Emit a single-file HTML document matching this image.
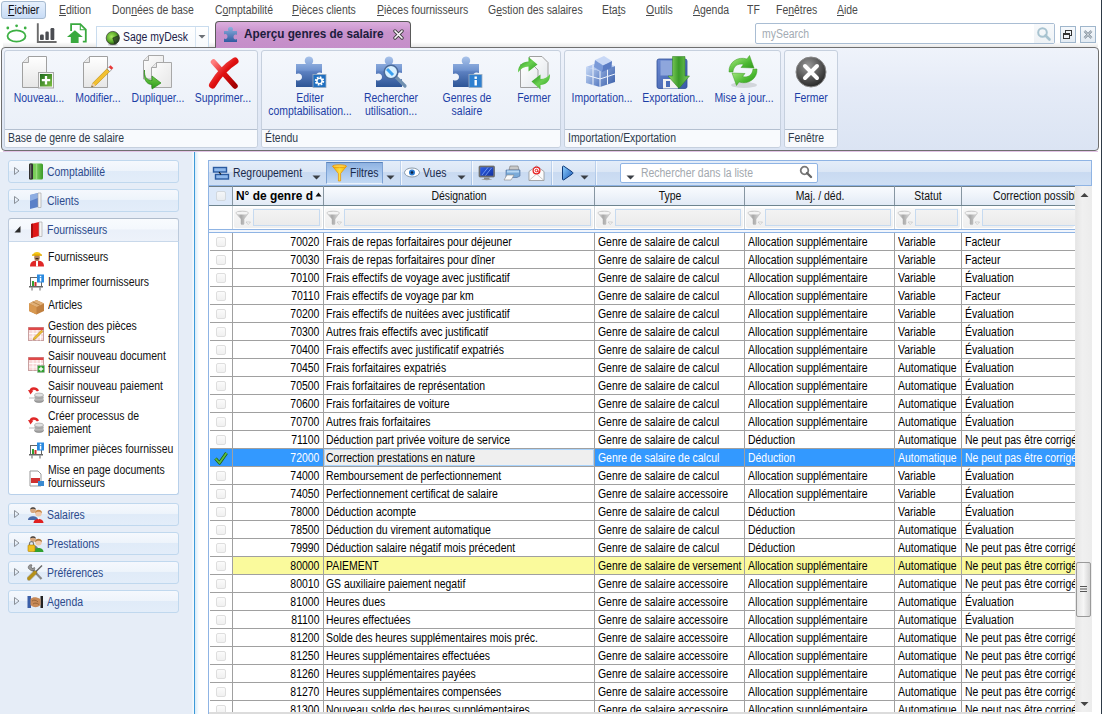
<!DOCTYPE html><html><head><meta charset="utf-8"><style>
html,body{margin:0;padding:0;}
body{width:1102px;height:714px;overflow:hidden;position:relative;background:#fff;font-family:"Liberation Sans",sans-serif;}
.t{position:absolute;line-height:1;white-space:nowrap;}
.r{position:absolute;box-sizing:border-box;}
u{text-decoration:underline;text-underline-offset:1px;text-decoration-thickness:1px;}
</style></head><body>
<div class="r" style="left:1px;top:1px;width:45px;height:18px;border:1px solid #a6bad0;border-radius:3px;background:linear-gradient(#e6f0fc,#c8dcf6);"></div>
<div class="t " style="top:3.64px;font-size:12px;color:#101018;left:8.20px;transform-origin:0 50%;transform:scaleX(0.87);"><u>F</u>ichier</div>
<div class="t " style="top:3.64px;font-size:12px;color:#4a4a4a;left:59.40px;transform-origin:0 50%;transform:scaleX(0.87);"><u>E</u>dition</div>
<div class="t " style="top:3.64px;font-size:12px;color:#4a4a4a;left:111.60px;transform-origin:0 50%;transform:scaleX(0.87);">Don<u>n</u>ées de base</div>
<div class="t " style="top:3.64px;font-size:12px;color:#4a4a4a;left:215.00px;transform-origin:0 50%;transform:scaleX(0.87);">C<u>o</u>mptabilité</div>
<div class="t " style="top:3.64px;font-size:12px;color:#4a4a4a;left:292.30px;transform-origin:0 50%;transform:scaleX(0.87);"><u>P</u>ièces clients</div>
<div class="t " style="top:3.64px;font-size:12px;color:#4a4a4a;left:376.60px;transform-origin:0 50%;transform:scaleX(0.87);"><u>P</u>ièces fournisseurs</div>
<div class="t " style="top:3.64px;font-size:12px;color:#4a4a4a;left:487.50px;transform-origin:0 50%;transform:scaleX(0.87);">G<u>e</u>stion des salaires</div>
<div class="t " style="top:3.64px;font-size:12px;color:#4a4a4a;left:602.20px;transform-origin:0 50%;transform:scaleX(0.87);">Eta<u>t</u>s</div>
<div class="t " style="top:3.64px;font-size:12px;color:#4a4a4a;left:645.80px;transform-origin:0 50%;transform:scaleX(0.87);"><u>O</u>utils</div>
<div class="t " style="top:3.64px;font-size:12px;color:#4a4a4a;left:692.60px;transform-origin:0 50%;transform:scaleX(0.87);"><u>A</u>genda</div>
<div class="t " style="top:3.64px;font-size:12px;color:#4a4a4a;left:746.50px;transform-origin:0 50%;transform:scaleX(0.87);">TF</div>
<div class="t " style="top:3.64px;font-size:12px;color:#4a4a4a;left:776.40px;transform-origin:0 50%;transform:scaleX(0.87);">Fe<u>n</u>êtres</div>
<div class="t " style="top:3.64px;font-size:12px;color:#4a4a4a;left:837.20px;transform-origin:0 50%;transform:scaleX(0.87);"><u>A</u>ide</div>
<div class="r" style="left:3px;top:42px;width:1095px;height:5px;background:linear-gradient(rgba(0,0,0,0),rgba(0,0,0,.09));"></div>
<svg class="r" style="left:5px;top:22px;" width="24" height="22" viewBox="0 0 24 22"><ellipse cx="11.5" cy="14" rx="9" ry="5.6" fill="none" stroke="#3cb043" stroke-width="1.8"/><circle cx="2.8" cy="6" r="1.4" fill="#3cb043"/><circle cx="11.6" cy="3.8" r="1.4" fill="#3cb043"/><circle cx="20.2" cy="6" r="1.4" fill="#3cb043"/></svg>
<svg class="r" style="left:36px;top:22px;" width="22" height="22" viewBox="0 0 22 22"><path d="M1.8 1.3 V20 H20.6" fill="none" stroke="#6b6b6b" stroke-width="1.9"/><rect x="4" y="12.5" width="3.8" height="5.6" rx="1.2" fill="#4b4d52"/><rect x="9.4" y="9.6" width="3.4" height="8.5" rx="1.2" fill="#4b4d52"/><rect x="14.5" y="6" width="3.8" height="12.1" rx="1.2" fill="#4b4d52"/></svg>
<svg class="r" style="left:66px;top:22px;" width="22" height="22" viewBox="0 0 22 22"><path d="M5.1 9 V2.2 H14.3 L19.8 7.7 V19.7 H16.8" fill="none" stroke="#3aa93f" stroke-width="1.8"/><path d="M14.3 2.2 V7.7 H19.8" fill="none" stroke="#3aa93f" stroke-width="1.1"/><path d="M1 15 L8.9 8.2 L16.8 15 H12.6 V20.9 H4.8 V15 Z" fill="#3aa93f"/></svg>
<div class="r" style="left:96px;top:26px;width:113px;height:22px;border:1px solid #c9dcee;border-bottom:none;background:linear-gradient(#ffffff,#f6f9fc);"></div>
<div class="r" style="left:195px;top:27px;width:1px;height:20px;background:#d6e4f1;"></div>
<svg class="r" style="left:197px;top:34px;" width="10" height="6" viewBox="0 0 10 6"><path d="M1.5 1 H8.5 L5 4.5 Z" fill="#6a6f75"/></svg>
<svg class="r" style="left:104px;top:30px;" width="16" height="16" viewBox="0 0 16 16"><defs><radialGradient id="gl" cx="40%" cy="40%" r="65%"><stop offset="0" stop-color="#a8e860"/><stop offset=".6" stop-color="#58a828"/><stop offset="1" stop-color="#1e3a10"/></radialGradient></defs><ellipse cx="8.8" cy="14.8" rx="5" ry="1" fill="#000" opacity=".2"/><circle cx="8.8" cy="8" r="6.6" fill="url(#gl)" stroke="#3a3a3a" stroke-width=".7"/><path d="M8.8 8 L14.8 5.5 A6.5 6.5 0 0 1 11 14.2 Z" fill="#2a3a28" opacity=".75"/><path d="M8.8 8 L14.8 5.5 M8.8 8 L11 14.2" stroke="#1a2a18" stroke-width=".6"/></svg>
<div class="t " style="top:31.04px;font-size:12px;color:#1c1c48;left:123.00px;transform-origin:0 50%;transform:scaleX(0.87);">Sage myDesk</div>
<div class="r" style="left:215px;top:21px;width:196px;height:27px;border:1px solid #5a5a5a;border-bottom:none;border-radius:4px 4px 0 0;background:linear-gradient(#dcaede,#c892cc 40%,#c58ec9);"></div>
<svg class="r" style="left:223px;top:26px;" width="17" height="17" viewBox="0 0 17 17"><defs><linearGradient id="pz" x1="0" y1="0" x2="0" y2="1"><stop offset="0" stop-color="#8fb1e0"/><stop offset="1" stop-color="#2f5aa0"/></linearGradient></defs><path d="M1 5 H5.5 C4.5 3 5 1 7.5 1 C10 1 10.5 3 9.5 5 H14 V9 C12 8 10.5 9 10.5 11 C10.5 13 12 14 14 13 V16 H1 V12.5 C3 13.5 4.5 12.5 4.5 10.5 C4.5 8.5 3 7.5 1 8.5 Z" fill="url(#pz)"/></svg>
<div class="t " style="top:28.34px;font-size:12px;color:#1c1c3c;font-weight:bold;left:244.30px;transform-origin:0 50%;transform:scaleX(0.978);">Aperçu genres de salaire</div>
<svg class="r" style="left:393px;top:29px;" width="11" height="11" viewBox="0 0 11 11"><path d="M2 2 L9 9 M9 2 L2 9" stroke="#404040" stroke-width="3.4" stroke-linecap="round"/><path d="M2 2 L9 9 M9 2 L2 9" stroke="#fbf4fb" stroke-width="1.7" stroke-linecap="round"/></svg>
<div class="r" style="left:755px;top:23px;width:300px;height:21px;border:1px solid #a9bdd3;border-radius:2px;background:#fff;"></div>
<div class="r" style="left:1034px;top:24px;width:20px;height:19px;background:linear-gradient(#f7f9fb,#eef2f5);"></div>
<div class="t " style="top:28.04px;font-size:12px;color:#a3abb3;left:762.00px;transform-origin:0 50%;transform:scaleX(0.87);">mySearch</div>
<svg class="r" style="left:1036px;top:26px;" width="16" height="16" viewBox="0 0 16 16"><circle cx="6.5" cy="6.5" r="4.3" fill="none" stroke="#a8c3d0" stroke-width="2"/><path d="M9.5 9.5 L13.5 13.5" stroke="#a8c3d0" stroke-width="2.6" stroke-linecap="round"/></svg>
<div class="r" style="left:1060px;top:26px;width:16px;height:17px;border:1px solid #9fb6cc;background:linear-gradient(#f6f9fc,#e3ebf3);"></div>
<svg class="r" style="left:1060px;top:26px;" width="16" height="17" viewBox="0 0 16 17"><rect x="5.5" y="4.5" width="6" height="5" fill="none" stroke="#333" stroke-width="1"/><rect x="3.5" y="7.5" width="6" height="5" fill="#eef2f7" stroke="#333" stroke-width="1"/><rect x="3.5" y="7.5" width="6" height="1.5" fill="#333"/></svg>
<div class="r" style="left:1080px;top:26px;width:16px;height:17px;border:1px solid #9fb6cc;background:linear-gradient(#f6f9fc,#e3ebf3);"></div>
<svg class="r" style="left:1080px;top:26px;" width="16" height="17" viewBox="0 0 16 17"><path d="M4.5 5 L11.5 12 M11.5 5 L4.5 12" stroke="#6a7a88" stroke-width="2.4"/><path d="M4.5 5 L11.5 12 M11.5 5 L4.5 12" stroke="#f4f7fa" stroke-width="1"/></svg>
<div class="r" style="left:1101px;top:0px;width:1px;height:714px;background:#2e3a46;"></div>
<div class="r" style="left:1px;top:47px;width:1098px;height:104px;border:1px solid #6f6f6f;border-radius:4px;background:linear-gradient(#eff3fb,#e5ebf7 40%,#dbe4f3);"></div>
<div class="r" style="left:3px;top:151px;width:1095px;height:1px;background:#e3c4e6;"></div>
<div class="r" style="left:216px;top:47px;width:194px;height:1px;background:#c58ec9;"></div>
<div class="r" style="left:4px;top:50px;width:254px;height:98px;border:1px solid #c6d0de;border-radius:3px;background:linear-gradient(#f4f7fc,#e8eef7);"></div>
<div class="r" style="left:5px;top:129px;width:252px;height:18px;border-top:1px solid #b4c0d0;background:#f8fafd;border-radius:0 0 2px 2px;"></div>
<div class="t " style="top:132.14px;font-size:12px;color:#2e3a4c;left:8.00px;transform-origin:0 50%;transform:scaleX(0.87);">Base de genre de salaire</div>
<div class="r" style="left:261px;top:50px;width:300px;height:98px;border:1px solid #c6d0de;border-radius:3px;background:linear-gradient(#f4f7fc,#e8eef7);"></div>
<div class="r" style="left:262px;top:129px;width:298px;height:18px;border-top:1px solid #b4c0d0;background:#f8fafd;border-radius:0 0 2px 2px;"></div>
<div class="t " style="top:132.14px;font-size:12px;color:#2e3a4c;left:265.00px;transform-origin:0 50%;transform:scaleX(0.87);">Étendu</div>
<div class="r" style="left:564px;top:50px;width:217px;height:98px;border:1px solid #c6d0de;border-radius:3px;background:linear-gradient(#f4f7fc,#e8eef7);"></div>
<div class="r" style="left:565px;top:129px;width:215px;height:18px;border-top:1px solid #b4c0d0;background:#f8fafd;border-radius:0 0 2px 2px;"></div>
<div class="t " style="top:132.14px;font-size:12px;color:#2e3a4c;left:568.00px;transform-origin:0 50%;transform:scaleX(0.87);">Importation/Exportation</div>
<div class="r" style="left:784px;top:50px;width:54px;height:98px;border:1px solid #c6d0de;border-radius:3px;background:linear-gradient(#f4f7fc,#e8eef7);"></div>
<div class="r" style="left:785px;top:129px;width:52px;height:18px;border-top:1px solid #b4c0d0;background:#f8fafd;border-radius:0 0 2px 2px;"></div>
<div class="t " style="top:132.14px;font-size:12px;color:#2e3a4c;left:788.00px;transform-origin:0 50%;transform:scaleX(0.87);">Fenêtre</div>
<svg class="r" style="left:20px;top:54px;" width="40" height="36" viewBox="0 0 40 36"><defs><linearGradient id="dn" x1="0" y1="0" x2="0" y2="1"><stop offset="0" stop-color="#ffffff"/><stop offset="1" stop-color="#e6e6e6"/></linearGradient></defs><path d="M8.5 2.5 H26.5 V33.5 H2.5 V8.5 Z" fill="url(#dn)" stroke="#a0a0a0"/><path d="M8.5 2.5 V8.5 H2.5" fill="#e8e8e8" stroke="#a8a8a8"/><defs><linearGradient id="gp" x1="0" y1="0" x2="1" y2="1"><stop offset="0" stop-color="#1e6a1e"/><stop offset="1" stop-color="#7cc040"/></linearGradient></defs><rect x="18.5" y="18.5" width="15" height="15.5" fill="#f4f4f4" stroke="#a8a8a8"/><rect x="20" y="20" width="12" height="12.5" fill="url(#gp)"/><path d="M26 22 V30.5 M21.8 26.2 H30.2" stroke="#fff" stroke-width="2.3"/></svg>
<div class="t " style="top:92.34px;font-size:12px;color:#1c3ea6;left:-361.50px;width:800px;text-align:center;transform-origin:50% 50%;transform:scaleX(0.87);">Nouveau...</div>
<svg class="r" style="left:81px;top:54px;" width="40" height="36" viewBox="0 0 40 36"><defs><linearGradient id="dm" x1="0" y1="0" x2="0" y2="1"><stop offset="0" stop-color="#ffffff"/><stop offset="1" stop-color="#e6e6e6"/></linearGradient></defs><path d="M8.5 2.5 H26.5 V33.5 H2.5 V8.5 Z" fill="url(#dm)" stroke="#a0a0a0"/><path d="M8.5 2.5 V8.5 H2.5" fill="#e8e8e8" stroke="#a8a8a8"/><path d="M10.5 33 L11.8 29 L26 14.8 L28.7 17.5 L14.5 31.5 Z" fill="#f2c030" stroke="#b88a10" stroke-width=".6"/><path d="M26 14.8 L27.8 13 L30.5 15.7 L28.7 17.5 Z" fill="#fff" stroke="#555" stroke-width=".5"/><path d="M27.8 13 L29.6 11.2 L32.3 13.9 L30.5 15.7 Z" fill="#e83838"/><path d="M10.5 33 L11.8 29 L14.5 31.5 Z" fill="#f0d0b0"/><path d="M10.5 33 L11 31.6 L12 32.5 Z" fill="#333"/></svg>
<div class="t " style="top:92.34px;font-size:12px;color:#1c3ea6;left:-302.00px;width:800px;text-align:center;transform-origin:50% 50%;transform:scaleX(0.87);">Modifier...</div>
<svg class="r" style="left:143px;top:55px;" width="32" height="35" viewBox="0 0 32 35"><defs><linearGradient id="dg" x1="0" y1="0" x2="1" y2="1"><stop offset="0" stop-color="#fdfdfd"/><stop offset="1" stop-color="#e6e6e6"/></linearGradient><linearGradient id="ga" x1="0" y1="0" x2="0" y2="1"><stop offset="0" stop-color="#8ee060"/><stop offset="1" stop-color="#2c9a18"/></linearGradient></defs><path d="M5.5 0.5 H20.5 V24 H0.5 V5.5 Z" fill="url(#dg)" stroke="#a8a8a8"/><path d="M5.5 0.5 V5.5 H0.5" fill="#e8e8e8" stroke="#a8a8a8"/><path d="M13.5 7.5 H28.5 V32.5 H8.5 V12.5 Z" fill="url(#dg)" stroke="#a8a8a8"/><path d="M13.5 7.5 V12.5 H8.5" fill="#e8e8e8" stroke="#a8a8a8"/><path d="M1.5 15 C1 22 4 25.5 9 25.5 V21 L18 28 L9 34 V29.5 C3 29.5 0.5 24 1.5 15 Z" fill="url(#ga)" stroke="#2a8a1a" stroke-width=".7"/></svg>
<div class="t " style="top:92.34px;font-size:12px;color:#1c3ea6;left:-242.00px;width:800px;text-align:center;transform-origin:50% 50%;transform:scaleX(0.87);">Dupliquer...</div>
<svg class="r" style="left:205px;top:56px;" width="36" height="34" viewBox="0 0 36 34"><defs><linearGradient id="rx" x1="0" y1="0" x2="1" y2="1"><stop offset="0" stop-color="#ff8080"/><stop offset=".5" stop-color="#e01010"/><stop offset="1" stop-color="#a00000"/></linearGradient></defs><path d="M8.5 6 L30 30" stroke="url(#rx)" stroke-width="5.5" stroke-linecap="round"/><path d="M30 5 C22 10 14 18 7.5 29" fill="none" stroke="url(#rx)" stroke-width="7" stroke-linecap="round"/></svg>
<div class="t " style="top:92.34px;font-size:12px;color:#1c3ea6;left:-177.20px;width:800px;text-align:center;transform-origin:50% 50%;transform:scaleX(0.87);">Supprimer...</div>
<svg class="r" style="left:295px;top:55px;" width="34" height="34" viewBox="0 0 34 34"><defs><linearGradient id="pz2" x1="0" y1="0" x2="0" y2="1"><stop offset="0" stop-color="#a9c3ea"/><stop offset=".45" stop-color="#6f93cf"/><stop offset=".5" stop-color="#5c80c0"/><stop offset="1" stop-color="#2d5596"/></linearGradient></defs><path d="M1 9 H11 C8.5 6 10 1.5 14 1.5 C18 1.5 19.5 6 17 9 H27 V18 C24 16.5 21 18 21 21 C21 24 24 25.5 27 24 V32 H1 V25 C4 26.5 7 25 7 22 C7 19 4 17.5 1 19 Z" fill="url(#pz2)"/><rect x="18" y="19.5" width="13" height="13" fill="#1f6fc0" stroke="#a0b0c0" stroke-width=".8"/><circle cx="24.5" cy="26" r="3.6" fill="none" stroke="#fff" stroke-width="2.2" stroke-dasharray="1.6 1.2"/><circle cx="24.5" cy="26" r="2.6" fill="none" stroke="#fff" stroke-width="1.4"/></svg>
<div class="t " style="top:92.34px;font-size:12px;color:#1c3ea6;left:-90.50px;width:800px;text-align:center;transform-origin:50% 50%;transform:scaleX(0.87);">Editer</div>
<div class="t " style="top:105.34px;font-size:12px;color:#1c3ea6;left:-90.50px;width:800px;text-align:center;transform-origin:50% 50%;transform:scaleX(0.87);">comptabilisation...</div>
<svg class="r" style="left:375px;top:55px;" width="34" height="34" viewBox="0 0 34 34"><defs><linearGradient id="pz3" x1="0" y1="0" x2="0" y2="1"><stop offset="0" stop-color="#a9c3ea"/><stop offset=".45" stop-color="#6f93cf"/><stop offset=".5" stop-color="#5c80c0"/><stop offset="1" stop-color="#2d5596"/></linearGradient></defs><path d="M1 9 H11 C8.5 6 10 1.5 14 1.5 C18 1.5 19.5 6 17 9 H27 V18 C24 16.5 21 18 21 21 C21 24 24 25.5 27 24 V32 H1 V25 C4 26.5 7 25 7 22 C7 19 4 17.5 1 19 Z" fill="url(#pz3)"/><path d="M21 22 L30 31" stroke="#7090b0" stroke-width="3.2" stroke-linecap="round"/><circle cx="16" cy="17" r="6.8" fill="#d8f0ff" stroke="#4a6a98" stroke-width="1.6"/><path d="M12 14 L18 20" stroke="#3aa0f0" stroke-width="3"/></svg>
<div class="t " style="top:92.34px;font-size:12px;color:#1c3ea6;left:-9.00px;width:800px;text-align:center;transform-origin:50% 50%;transform:scaleX(0.87);">Rechercher</div>
<div class="t " style="top:105.34px;font-size:12px;color:#1c3ea6;left:-9.00px;width:800px;text-align:center;transform-origin:50% 50%;transform:scaleX(0.87);">utilisation...</div>
<svg class="r" style="left:452px;top:55px;" width="34" height="34" viewBox="0 0 34 34"><defs><linearGradient id="pz4" x1="0" y1="0" x2="0" y2="1"><stop offset="0" stop-color="#a9c3ea"/><stop offset=".45" stop-color="#6f93cf"/><stop offset=".5" stop-color="#5c80c0"/><stop offset="1" stop-color="#2d5596"/></linearGradient></defs><path d="M1 9 H11 C8.5 6 10 1.5 14 1.5 C18 1.5 19.5 6 17 9 H27 V18 C24 16.5 21 18 21 21 C21 24 24 25.5 27 24 V32 H1 V25 C4 26.5 7 25 7 22 C7 19 4 17.5 1 19 Z" fill="url(#pz4)"/><rect x="17" y="19.5" width="13" height="13" fill="#2f80d0" stroke="#a0b0c0" stroke-width=".8"/><rect x="22.5" y="21.5" width="2.4" height="2.4" fill="#fff"/><rect x="22.5" y="25" width="2.4" height="5.5" fill="#fff"/></svg>
<div class="t " style="top:92.34px;font-size:12px;color:#1c3ea6;left:66.50px;width:800px;text-align:center;transform-origin:50% 50%;transform:scaleX(0.87);">Genres de</div>
<div class="t " style="top:105.34px;font-size:12px;color:#1c3ea6;left:66.50px;width:800px;text-align:center;transform-origin:50% 50%;transform:scaleX(0.87);">salaire</div>
<svg class="r" style="left:516px;top:55px;" width="36" height="35" viewBox="0 0 36 35"><defs><linearGradient id="fd" x1="0" y1="0" x2="1" y2="1"><stop offset="0" stop-color="#ffffff"/><stop offset="1" stop-color="#e4e8ec"/></linearGradient><linearGradient id="fa" x1="0" y1="0" x2="1" y2="1"><stop offset="0" stop-color="#1f8a18"/><stop offset=".5" stop-color="#6ad050"/><stop offset="1" stop-color="#2a9a20"/></linearGradient></defs><path d="M13.5 1.5 H26 L32 7.5 V25 H13.5 Z" fill="url(#fd)" stroke="#a0a0a0"/><path d="M4.5 9.5 H16.5 L22 15 V32.5 H4.5 Z" fill="url(#fd)" stroke="#a0a0a0"/><path d="M2 17.5 C2 10 7 6.5 12.5 6.5 V2 L21.5 9.5 L12.5 16.5 V11.5 C8 11.5 5 13.5 2 17.5 Z" fill="url(#fa)"/><path d="M34 19 C34.5 26.5 29.5 30 24.5 30 V34.5 L15.5 26.5 L24.5 19.5 V24 C28.5 24 31.5 22.5 34 19 Z" fill="url(#fa)"/></svg>
<div class="t " style="top:92.34px;font-size:12px;color:#1c3ea6;left:134.00px;width:800px;text-align:center;transform-origin:50% 50%;transform:scaleX(0.87);">Fermer</div>
<svg class="r" style="left:584px;top:55px;" width="34" height="34" viewBox="0 0 34 34"><defs><linearGradient id="cb" x1="0" y1="0" x2="1" y2="1"><stop offset="0" stop-color="#c8daf6"/><stop offset="1" stop-color="#5478c0"/></linearGradient><linearGradient id="cb2" x1="0" y1="0" x2="1" y2="1"><stop offset="0" stop-color="#90acdf"/><stop offset="1" stop-color="#3a5ea8"/></linearGradient></defs><path d="M2 12 L16 16 V32 L2 28 Z" fill="url(#cb)"/><path d="M16 16 L31 11 V27 L16 32 Z" fill="url(#cb2)"/><path d="M2 12 L9 9.5 L16 8 L31 11 L16 16 Z" fill="#b0c6ee"/><path d="M2 20 L16 24 L31 19 M9 10 V30 M16 16 V32 M23.5 13.5 V29.5" fill="none" stroke="#eef3fc" stroke-width="1"/><path d="M11 5 L20 1 L28 6 L19 10.5 Z" fill="#c8d8f6"/><path d="M11 5 L19 10.5 L18 17 L10 12 Z" fill="#7a9ad8"/><path d="M19 10.5 L28 6 L27.5 13 L18 17 Z" fill="#5a7cc4"/></svg>
<div class="t " style="top:92.34px;font-size:12px;color:#1c3ea6;left:201.50px;width:800px;text-align:center;transform-origin:50% 50%;transform:scaleX(0.87);">Importation...</div>
<svg class="r" style="left:655px;top:55px;" width="36" height="35" viewBox="0 0 36 35"><defs><linearGradient id="ea" x1="0" y1="0" x2="1" y2="0"><stop offset="0" stop-color="#9ae070"/><stop offset=".5" stop-color="#3a9a28"/><stop offset="1" stop-color="#7ac860"/></linearGradient><linearGradient id="fb" x1="0" y1="0" x2="1" y2="1"><stop offset="0" stop-color="#6a88d0"/><stop offset="1" stop-color="#3a5aa8"/></linearGradient></defs><rect x="2" y="4" width="30" height="29.5" rx="2" fill="url(#fb)" stroke="#2e4e98" stroke-width=".8"/><rect x="5.5" y="5.5" width="13" height="15" fill="#8ea6dc"/><rect x="8" y="24" width="15" height="9.5" fill="#f2f2f2"/><rect x="11" y="26" width="4" height="6" fill="#4a6cb8"/><path d="M17.5 1.5 H30 V21 H34.5 L24 33.5 L13 21 H17.5 Z" fill="url(#ea)" stroke="#2a7a1a" stroke-width=".5"/></svg>
<div class="t " style="top:92.34px;font-size:12px;color:#1c3ea6;left:273.20px;width:800px;text-align:center;transform-origin:50% 50%;transform:scaleX(0.87);">Exportation...</div>
<svg class="r" style="left:726px;top:55px;" width="34" height="34" viewBox="0 0 34 34"><defs><linearGradient id="mj" x1="0" y1="0" x2="1" y2="1"><stop offset="0" stop-color="#b8f090"/><stop offset=".6" stop-color="#4ab830"/><stop offset="1" stop-color="#2a8a18"/></linearGradient></defs><ellipse cx="18" cy="30" rx="13" ry="3" fill="#000" opacity=".12"/><path d="M3 17 C2.5 7 12 1 21 4 L23.5 0.5 L28 13 L15 12.5 L17.5 9.5 C12 8 7.5 11 7 17 Z" fill="url(#mj)" stroke="#3a9a20" stroke-width=".5"/><path d="M31 14 C31.5 24 22 30 13 27 L10.5 30.5 L6 18 L19 18.5 L16.5 21.5 C22 23 26.5 20 27 14 Z" fill="url(#mj)" stroke="#3a9a20" stroke-width=".5"/></svg>
<div class="t " style="top:92.34px;font-size:12px;color:#1c3ea6;left:344.00px;width:800px;text-align:center;transform-origin:50% 50%;transform:scaleX(0.87);">Mise à jour...</div>
<svg class="r" style="left:794px;top:55px;" width="34" height="34" viewBox="0 0 34 34"><defs><radialGradient id="gc" cx="40%" cy="30%" r="70%"><stop offset="0" stop-color="#9a9a9a"/><stop offset="1" stop-color="#2a2a2a"/></radialGradient></defs><circle cx="17" cy="17" r="15" fill="url(#gc)" stroke="#888" stroke-width="1"/><path d="M11 11 L23 23 M23 11 L11 23" stroke="#fff" stroke-width="4" stroke-linecap="round"/></svg>
<div class="t " style="top:92.34px;font-size:12px;color:#1c3ea6;left:411.00px;width:800px;text-align:center;transform-origin:50% 50%;transform:scaleX(0.87);">Fermer</div>
<div class="r" style="left:0px;top:152px;width:192px;height:562px;background:#e6edf7;"></div>
<div class="r" style="left:192px;top:152px;width:3px;height:562px;background:linear-gradient(90deg,#e9f2fb,#ffffff);"></div>
<div class="r" style="left:194px;top:152px;width:1px;height:562px;background:#3d9ad8;"></div>
<div class="r" style="left:195px;top:152px;width:4px;height:562px;background:linear-gradient(90deg,#d8ecfa,#ffffff);"></div>
<div class="r" style="left:8px;top:160px;width:171px;height:23px;border:1px solid #c0d8ee;border-radius:3px;background:linear-gradient(#f5f8fd,#eef4fb 45%,#e0ebf8 50%,#e3edf9);"></div>
<svg class="r" style="left:13px;top:166px;" width="8" height="10" viewBox="0 0 8 10"><path d="M1.5 1.5 L6 5 L1.5 8.5 Z" fill="none" stroke="#8a9098" stroke-width="1"/></svg>
<svg class="r" style="left:27px;top:163px;" width="17" height="17" viewBox="0 0 17 17"><defs><linearGradient id="cg" x1="0" y1="0" x2="1" y2="0"><stop offset="0" stop-color="#60c040"/><stop offset=".5" stop-color="#80d060"/><stop offset="1" stop-color="#3a9a28"/></linearGradient></defs><rect x="2" y="0.5" width="14" height="16" rx="1.5" fill="url(#cg)"/><rect x="2" y="0.5" width="4" height="16" rx="1.2" fill="#303030"/><rect x="3.2" y="1.5" width="1" height="14" fill="#808080"/><rect x="9" y="1" width="1.2" height="15" fill="#a8e090" opacity=".7"/></svg>
<div class="t " style="top:166.34px;font-size:12px;color:#2c4a8c;left:47.20px;transform-origin:0 50%;transform:scaleX(0.87);">Comptabilité</div>
<div class="r" style="left:8px;top:189px;width:171px;height:23px;border:1px solid #c0d8ee;border-radius:3px;background:linear-gradient(#f5f8fd,#eef4fb 45%,#e0ebf8 50%,#e3edf9);"></div>
<svg class="r" style="left:13px;top:195px;" width="8" height="10" viewBox="0 0 8 10"><path d="M1.5 1.5 L6 5 L1.5 8.5 Z" fill="none" stroke="#8a9098" stroke-width="1"/></svg>
<svg class="r" style="left:27px;top:192px;" width="17" height="17" viewBox="0 0 17 17"><path d="M3 3 L11 1 V15 L3 17 Z" fill="#5a80c8"/><path d="M3 3 L11 1 V6 L3 9 Z" fill="#9ab8e8" opacity=".8"/><path d="M11 1 H14 V15.5 H11 Z" fill="#f4f4f4" stroke="#a0a0a0" stroke-width=".6"/></svg>
<div class="t " style="top:195.34px;font-size:12px;color:#2c4a8c;left:47.20px;transform-origin:0 50%;transform:scaleX(0.87);">Clients</div>
<div class="r" style="left:8px;top:218px;width:171px;height:24px;border:1px solid #bccadc;border-top-color:#b0bccc;border-radius:3px 3px 0 0;background:linear-gradient(#f8fbfe,#f4f8fd 45%,#eaf0f9 50%,#edf2fa);"></div>
<svg class="r" style="left:14px;top:225px;" width="8" height="9" viewBox="0 0 8 9"><path d="M6.5 1 V7.5 H0.5 Z" fill="#2a2a2a"/></svg>
<svg class="r" style="left:27px;top:221px;" width="17" height="17" viewBox="0 0 17 17"><path d="M4 3 L12 1 V15 L4 17 Z" fill="#e01818"/><path d="M4 3 L6 2.5 V16.5 L4 17 Z" fill="#a01010"/><path d="M12 1 H15 V15.5 H12 Z" fill="#f4f4f4" stroke="#a0a0a0" stroke-width=".6"/></svg>
<div class="t " style="top:224.34px;font-size:12px;color:#2c4a8c;left:47.20px;transform-origin:0 50%;transform:scaleX(0.87);">Fournisseurs</div>
<div class="r" style="left:8px;top:241px;width:171px;height:254px;border:1px solid #b8d0ea;border-top:1px solid #c8d8ea;border-radius:0 0 3px 3px;background:#fff;"></div>
<div class="r" style="left:8px;top:503px;width:171px;height:23px;border:1px solid #c0d8ee;border-radius:3px;background:linear-gradient(#f5f8fd,#eef4fb 45%,#e0ebf8 50%,#e3edf9);"></div>
<svg class="r" style="left:13px;top:509px;" width="8" height="10" viewBox="0 0 8 10"><path d="M1.5 1.5 L6 5 L1.5 8.5 Z" fill="none" stroke="#8a9098" stroke-width="1"/></svg>
<svg class="r" style="left:27px;top:506px;" width="17" height="17" viewBox="0 0 17 17"><circle cx="6" cy="4.2" r="2.8" fill="#d8a880"/><path d="M3.2 3.8 C3 0.5 9 0.5 8.8 3.8 C8 2.5 4 2.5 3.2 3.8 Z" fill="#3a3a3a"/><path d="M1 14 C1 9 11 9 11 14 Z" fill="#4a6aa8"/><circle cx="11.5" cy="7.2" r="3.2" fill="#f0c8a8"/><path d="M8 7.5 C7.5 2.5 15.5 2.5 15 7.5 C14 5 9 5 8 7.5 Z" fill="#c88848"/><path d="M6.5 17 C6.5 11.5 16.5 11.5 16.5 17 Z" fill="#e02020"/><path d="M10.8 11.8 L11.5 14 L12.2 11.8 Z" fill="#fff"/></svg>
<div class="t " style="top:509.34px;font-size:12px;color:#2c4a8c;left:47.20px;transform-origin:0 50%;transform:scaleX(0.87);">Salaires</div>
<div class="r" style="left:8px;top:532px;width:171px;height:23px;border:1px solid #c0d8ee;border-radius:3px;background:linear-gradient(#f5f8fd,#eef4fb 45%,#e0ebf8 50%,#e3edf9);"></div>
<svg class="r" style="left:13px;top:538px;" width="8" height="10" viewBox="0 0 8 10"><path d="M1.5 1.5 L6 5 L1.5 8.5 Z" fill="none" stroke="#8a9098" stroke-width="1"/></svg>
<svg class="r" style="left:27px;top:535px;" width="17" height="17" viewBox="0 0 17 17"><circle cx="6" cy="4.2" r="2.8" fill="#d8a880"/><path d="M3.2 3.8 C3 0.5 9 0.5 8.8 3.8 C8 2.5 4 2.5 3.2 3.8 Z" fill="#3a3a3a"/><path d="M1 14 C1 9 11 9 11 14 Z" fill="#6a7a90"/><circle cx="11.5" cy="7.2" r="3.2" fill="#f0c8a8"/><path d="M8 7.5 C7.5 2.5 15.5 2.5 15 7.5 C14 5 9 5 8 7.5 Z" fill="#b07838"/><path d="M6.5 17 C6.5 11.5 16.5 11.5 16.5 17 Z" fill="#30a030"/><path d="M2.5 10 V8.5 C2.5 6 6.5 6 6.5 8.5 V10" fill="none" stroke="#777" stroke-width="1.2"/><rect x="1" y="10" width="7" height="6.5" rx=".8" fill="#f0c020" stroke="#b08000" stroke-width=".6"/></svg>
<div class="t " style="top:538.34px;font-size:12px;color:#2c4a8c;left:47.20px;transform-origin:0 50%;transform:scaleX(0.87);">Prestations</div>
<div class="r" style="left:8px;top:561px;width:171px;height:23px;border:1px solid #c0d8ee;border-radius:3px;background:linear-gradient(#f5f8fd,#eef4fb 45%,#e0ebf8 50%,#e3edf9);"></div>
<svg class="r" style="left:13px;top:567px;" width="8" height="10" viewBox="0 0 8 10"><path d="M1.5 1.5 L6 5 L1.5 8.5 Z" fill="none" stroke="#8a9098" stroke-width="1"/></svg>
<svg class="r" style="left:27px;top:564px;" width="17" height="17" viewBox="0 0 17 17"><path d="M4 4 L14.5 15" stroke="#888" stroke-width="2.2"/><path d="M1.5 4.5 C0.5 2 3 0 5 1 L4 3.2 L5.5 4.6 L7.5 3.5 C8.5 5.5 6.5 7.5 4 6.5 Z" fill="#999" stroke="#555" stroke-width=".6"/><path d="M15 1.5 L7.5 9" stroke="#666" stroke-width="1.4"/><path d="M8 8.5 L2 14.5" stroke="#e8b818" stroke-width="3.4" stroke-linecap="round"/><path d="M8 8.5 L2 14.5" stroke="#222" stroke-width="4.6" stroke-linecap="round" opacity=".25"/></svg>
<div class="t " style="top:567.34px;font-size:12px;color:#2c4a8c;left:47.20px;transform-origin:0 50%;transform:scaleX(0.87);">Préférences</div>
<div class="r" style="left:8px;top:590px;width:171px;height:23px;border:1px solid #c0d8ee;border-radius:3px;background:linear-gradient(#f5f8fd,#eef4fb 45%,#e0ebf8 50%,#e3edf9);"></div>
<svg class="r" style="left:13px;top:596px;" width="8" height="10" viewBox="0 0 8 10"><path d="M1.5 1.5 L6 5 L1.5 8.5 Z" fill="none" stroke="#8a9098" stroke-width="1"/></svg>
<svg class="r" style="left:27px;top:593px;" width="17" height="17" viewBox="0 0 17 17"><rect x="0.5" y="3" width="3.5" height="12" fill="#3a5ea8"/><rect x="13.5" y="3" width="2.5" height="12" fill="#222"/><path d="M3.5 6 C6 3.5 9 3.5 13.5 6 V12 C10 15 7 15 3.5 12 Z" fill="#c88a58"/><path d="M5 8 C7 6.5 9 7 11 9 M6 11 C8 9.5 10 10 12 11.5" stroke="#8a5a30" stroke-width=".8" fill="none"/></svg>
<div class="t " style="top:596.34px;font-size:12px;color:#2c4a8c;left:47.20px;transform-origin:0 50%;transform:scaleX(0.87);">Agenda</div>
<svg class="r" style="left:28px;top:250px;" width="17" height="17" viewBox="0 0 17 17"><path d="M2 16.5 C2 11 6 10.5 9 10.5 C12 10.5 16 11 16 16.5 Z" fill="#e02828"/><path d="M8 10.5 H10 V16.5 H8 Z" fill="#fff"/><ellipse cx="9" cy="7.5" rx="2.8" ry="3.4" fill="#b08060"/><path d="M7.5 8.6 H10.5" stroke="#3a2a1a" stroke-width="1.2"/><path d="M5 5 C5 1 13 1 13 5 Z" fill="#f5c518"/><rect x="4" y="4.4" width="10" height="1.4" fill="#e0a800"/></svg>
<div class="t " style="top:251.14px;font-size:12px;color:#111;left:48.20px;transform-origin:0 50%;transform:scaleX(0.87);">Fournisseurs</div>
<svg class="r" style="left:28px;top:274px;" width="17" height="17" viewBox="0 0 17 17"><rect x="2.5" y="3.5" width="11" height="9" fill="#fff" stroke="#666" stroke-width="1"/><rect x="4" y="7" width="2" height="5" fill="#30a030"/><rect x="6.5" y="8" width="2" height="4" fill="#d03030"/><rect x="1" y="12" width="14" height="1.5" fill="#666"/><path d="M4 13.5 V16.5 M12 13.5 V16.5" stroke="#666" stroke-width="1"/><rect x="9" y="0.5" width="7" height="8" fill="#2a8ae0"/><rect x="11.8" y="1.8" width="1.5" height="1.5" fill="#fff"/><rect x="11.8" y="4" width="1.5" height="3.5" fill="#fff"/></svg>
<div class="t " style="top:275.54px;font-size:12px;color:#111;left:48.20px;transform-origin:0 50%;transform:scaleX(0.87);">Imprimer fournisseurs</div>
<svg class="r" style="left:28px;top:298px;" width="17" height="17" viewBox="0 0 17 17"><path d="M1 5.5 L8.5 2 L16 5.5 V13 L8.5 16.5 L1 13 Z" fill="#c08040"/><path d="M1 5.5 L8.5 9 L16 5.5 L8.5 2 Z" fill="#e0b078"/><path d="M1 5.5 L8.5 9 V16.5 L1 13 Z" fill="#d89850"/><path d="M4.5 3.8 L12 7.3" stroke="#b07838" stroke-width=".8"/></svg>
<div class="t " style="top:299.34px;font-size:12px;color:#111;left:48.20px;transform-origin:0 50%;transform:scaleX(0.87);">Articles</div>
<svg class="r" style="left:28px;top:326px;" width="17" height="17" viewBox="0 0 17 17"><rect x="0.5" y="1.5" width="15" height="13" fill="#fff" stroke="#c8a0a0"/><rect x="0.5" y="1.5" width="15" height="2.5" fill="#e04848"/><rect x="1" y="4" width="14" height="10" fill="#f8d8d8"/><path d="M1 7.5 H15 M1 11 H15 M5 4 V14.5 M9 4 V14.5 M12.5 4 V14.5" stroke="#fff" stroke-width=".9"/><path d="M5 14 L6 11.5 L13.5 4 L15 5.5 L7.5 13 Z" fill="#f0c030" stroke="#a07010" stroke-width=".5"/></svg>
<div class="t " style="top:320.34px;font-size:12px;color:#111;left:48.20px;transform-origin:0 50%;transform:scaleX(0.87);">Gestion des pièces</div>
<div class="t " style="top:332.94px;font-size:12px;color:#111;left:48.20px;transform-origin:0 50%;transform:scaleX(0.87);">fournisseurs</div>
<svg class="r" style="left:28px;top:356px;" width="17" height="17" viewBox="0 0 17 17"><rect x="0.5" y="1.5" width="15" height="13" fill="#fff" stroke="#c8a0a0"/><rect x="0.5" y="1.5" width="15" height="2.5" fill="#e04848"/><rect x="1" y="4" width="14" height="10" fill="#f8d8d8"/><path d="M1 7.5 H15 M1 11 H15 M5 4 V14.5 M9 4 V14.5 M12.5 4 V14.5" stroke="#fff" stroke-width=".9"/><rect x="9.5" y="9.5" width="7" height="7" fill="#30a030" stroke="#aaa" stroke-width=".5"/><path d="M13 10.8 V15.2 M10.8 13 H15.2" stroke="#fff" stroke-width="1.3"/></svg>
<div class="t " style="top:350.34px;font-size:12px;color:#111;left:48.20px;transform-origin:0 50%;transform:scaleX(0.87);">Saisir nouveau document</div>
<div class="t " style="top:362.94px;font-size:12px;color:#111;left:48.20px;transform-origin:0 50%;transform:scaleX(0.87);">fournisseur</div>
<svg class="r" style="left:28px;top:386px;" width="17" height="17" viewBox="0 0 17 17"><path d="M10 5 C8 1.5 3 1.5 2.5 5.5" fill="none" stroke="#e02828" stroke-width="2.4"/><path d="M0 4 L2.5 8.5 L5.5 4.5 Z" fill="#e02828"/><ellipse cx="11" cy="14.5" rx="4.5" ry="2" fill="#a0a0a0" stroke="#777" stroke-width=".5"/><rect x="6.5" y="9" width="9" height="5.5" fill="#b8b8b8"/><ellipse cx="11" cy="9" rx="4.5" ry="2" fill="#e0e0e0" stroke="#888" stroke-width=".5"/><path d="M6.5 11.5 C8 12.5 14 12.5 15.5 11.5" stroke="#888" stroke-width=".5" fill="none"/><path d="M1 12 H6" stroke="#bbb" stroke-width="1"/></svg>
<div class="t " style="top:380.34px;font-size:12px;color:#111;left:48.20px;transform-origin:0 50%;transform:scaleX(0.87);">Saisir nouveau paiement</div>
<div class="t " style="top:392.94px;font-size:12px;color:#111;left:48.20px;transform-origin:0 50%;transform:scaleX(0.87);">fournisseur</div>
<svg class="r" style="left:28px;top:416px;" width="17" height="17" viewBox="0 0 17 17"><path d="M10 5 C8 1.5 3 1.5 2.5 5.5" fill="none" stroke="#e02828" stroke-width="2.4"/><path d="M0 4 L2.5 8.5 L5.5 4.5 Z" fill="#e02828"/><ellipse cx="11" cy="14.5" rx="4.5" ry="2" fill="#a0a0a0" stroke="#777" stroke-width=".5"/><rect x="6.5" y="9" width="9" height="5.5" fill="#b8b8b8"/><ellipse cx="11" cy="9" rx="4.5" ry="2" fill="#e0e0e0" stroke="#888" stroke-width=".5"/><path d="M6.5 11.5 C8 12.5 14 12.5 15.5 11.5" stroke="#888" stroke-width=".5" fill="none"/><path d="M1 12 H6" stroke="#bbb" stroke-width="1"/></svg>
<div class="t " style="top:410.34px;font-size:12px;color:#111;left:48.20px;transform-origin:0 50%;transform:scaleX(0.87);">Créer processus de</div>
<div class="t " style="top:422.94px;font-size:12px;color:#111;left:48.20px;transform-origin:0 50%;transform:scaleX(0.87);">paiement</div>
<svg class="r" style="left:28px;top:442px;" width="17" height="17" viewBox="0 0 17 17"><rect x="2.5" y="3.5" width="11" height="9" fill="#fff" stroke="#666" stroke-width="1"/><rect x="4" y="7" width="2" height="5" fill="#30a030"/><rect x="6.5" y="8" width="2" height="4" fill="#d03030"/><rect x="1" y="12" width="14" height="1.5" fill="#666"/><path d="M4 13.5 V16.5 M12 13.5 V16.5" stroke="#666" stroke-width="1"/><rect x="9" y="0.5" width="7" height="8" fill="#2a8ae0"/><rect x="11.8" y="1.8" width="1.5" height="1.5" fill="#fff"/><rect x="11.8" y="4" width="1.5" height="3.5" fill="#fff"/></svg>
<div class="t " style="top:443.34px;font-size:12px;color:#111;left:48.20px;transform-origin:0 50%;transform:scaleX(0.87);">Imprimer pièces fournisseu</div>
<svg class="r" style="left:28px;top:470px;" width="17" height="17" viewBox="0 0 17 17"><path d="M2 1 H10 L13 4 V16 H2 Z" fill="#fff" stroke="#999"/><rect x="3" y="8" width="9" height="5" fill="#d03030"/><rect x="10" y="11" width="6" height="5" fill="#3a8ad0"/></svg>
<div class="t " style="top:464.44px;font-size:12px;color:#111;left:48.20px;transform-origin:0 50%;transform:scaleX(0.87);">Mise en page documents</div>
<div class="t " style="top:477.04px;font-size:12px;color:#111;left:48.20px;transform-origin:0 50%;transform:scaleX(0.87);">fournisseurs</div>
<div class="r" style="left:208px;top:160px;width:884px;height:26px;border:1px solid #8fb4e4;border-bottom:none;background:#fff;"></div>
<div class="r" style="left:208px;top:186px;width:1px;height:528px;background:#8fb4e4;"></div>
<div class="r" style="left:209px;top:161px;width:882px;height:25px;background:linear-gradient(#e4edf9 0%,#dbe6f5 45%,#c9daf1 48%,#cfdff4 100%);border-bottom:1px solid #8fb4e4;"></div>
<svg class="r" style="left:212px;top:166px;" width="18" height="14" viewBox="0 0 18 14"><rect x="1.5" y="1.5" width="13" height="4.5" fill="#8fb8ec" stroke="#2a5aa0" stroke-width="1.4"/><rect x="3.5" y="8.5" width="13" height="4.5" fill="#8fb8ec" stroke="#2a5aa0" stroke-width="1.4"/><path d="M7 6 L9 8.5" stroke="#111" stroke-width="1.2"/></svg>
<div class="t " style="top:167.14px;font-size:12px;color:#1a2a4a;left:232.80px;transform-origin:0 50%;transform:scaleX(0.87);">Regroupement</div>
<svg class="r" style="left:312px;top:175px;" width="9" height="5" viewBox="0 0 9 5"><path d="M0.5 0.5 H8.5 L4.5 4.5 Z" fill="#3a3f45"/></svg>
<div class="r" style="left:326px;top:162px;width:57px;height:22px;border:1px solid #7da2d4;border-top-color:#5a82ba;border-bottom-color:#eaf2fc;background:linear-gradient(#8fb3e2,#aac8ee 50%,#c4daf4);"></div>
<svg class="r" style="left:331px;top:164px;" width="17" height="18" viewBox="0 0 17 18"><defs><linearGradient id="fy" x1="0" y1="0" x2="1" y2="0"><stop offset="0" stop-color="#f0a800"/><stop offset=".5" stop-color="#ffe040"/><stop offset="1" stop-color="#f0b000"/></linearGradient></defs><path d="M1.5 2.2 H15.5 L9.6 9.5 V17 H7.4 V9.5 Z" fill="url(#fy)" stroke="#e89000" stroke-width=".7"/><ellipse cx="8.5" cy="2.2" rx="7" ry="1.5" fill="#ffd040" stroke="#e89000" stroke-width=".7"/></svg>
<div class="t " style="top:167.14px;font-size:12px;color:#1a2a4a;left:350.30px;transform-origin:0 50%;transform:scaleX(0.87);">Filtres</div>
<svg class="r" style="left:386px;top:175px;" width="9" height="5" viewBox="0 0 9 5"><path d="M0.5 0.5 H8.5 L4.5 4.5 Z" fill="#3a3f45"/></svg>
<div class="r" style="left:400px;top:161px;width:1px;height:24px;background:linear-gradient(#c0d4ee,#a8c2e4);"></div>
<div class="r" style="left:401px;top:161px;width:1px;height:24px;background:rgba(255,255,255,.7);"></div>
<svg class="r" style="left:404px;top:167px;" width="16" height="11" viewBox="0 0 16 11"><ellipse cx="8" cy="5.5" rx="7.5" ry="4.5" fill="#fff" stroke="#8a9aaa" stroke-width="1"/><circle cx="8" cy="5.5" r="3" fill="#2a7ad0"/><circle cx="8" cy="5.5" r="1.3" fill="#10203a"/></svg>
<div class="t " style="top:167.14px;font-size:12px;color:#1a2a4a;left:423.30px;transform-origin:0 50%;transform:scaleX(0.87);">Vues</div>
<svg class="r" style="left:457px;top:175px;" width="9" height="5" viewBox="0 0 9 5"><path d="M0.5 0.5 H8.5 L4.5 4.5 Z" fill="#3a3f45"/></svg>
<div class="r" style="left:471px;top:161px;width:1px;height:24px;background:linear-gradient(#c0d4ee,#a8c2e4);"></div>
<div class="r" style="left:472px;top:161px;width:1px;height:24px;background:rgba(255,255,255,.7);"></div>
<svg class="r" style="left:478px;top:165px;" width="18" height="16" viewBox="0 0 18 16"><defs><linearGradient id="mon" x1="0" y1="0" x2="1" y2="1"><stop offset="0" stop-color="#3060e8"/><stop offset="1" stop-color="#1030a0"/></linearGradient></defs><rect x="1" y="1" width="15.5" height="11" rx="1" fill="#777" stroke="#555" stroke-width=".6"/><rect x="2.3" y="2.3" width="13" height="8.4" fill="url(#mon)"/><path d="M4 10 L10 2.5 M7.5 10.5 L13.5 3" stroke="#90b8ff" stroke-width=".9" opacity=".8"/><path d="M6 12.5 H11.5 V14 H6 Z" fill="#888"/><path d="M3.5 14 H14 C14 15.5 3.5 15.5 3.5 14 Z" fill="#999"/></svg>
<svg class="r" style="left:503px;top:165px;" width="18" height="16" viewBox="0 0 18 16"><path d="M7 1 H15 L16 5 H6 Z" fill="#c8c8c8" stroke="#777" stroke-width=".6"/><path d="M3 5 H17 V11 L14 12.5 H3 Z" fill="#7aaad8" stroke="#4a6a98" stroke-width=".6"/><path d="M4 5.5 H16 V7.5 H4 Z" fill="#b8d8f4"/><path d="M4 10 H11 L8 15 H1 Z" fill="#fafafa" stroke="#888" stroke-width=".6"/></svg>
<svg class="r" style="left:528px;top:165px;" width="17" height="16" viewBox="0 0 17 16"><path d="M1 6.5 L8.5 1 L16 6.5 V15.5 H1 Z" fill="#fcfcfc" stroke="#888" stroke-width=".7"/><path d="M1 15.5 L8.5 9 L16 15.5" fill="none" stroke="#aaa" stroke-width=".6"/><circle cx="8.5" cy="5.5" r="3.4" fill="none" stroke="#e82020" stroke-width="1.3"/><circle cx="8.5" cy="5.5" r="1.3" fill="none" stroke="#e82020" stroke-width="1"/><path d="M9.8 5.5 V7 H12" fill="none" stroke="#e82020" stroke-width="1"/></svg>
<div class="r" style="left:551px;top:161px;width:1px;height:24px;background:linear-gradient(#c0d4ee,#a8c2e4);"></div>
<div class="r" style="left:552px;top:161px;width:1px;height:24px;background:rgba(255,255,255,.7);"></div>
<svg class="r" style="left:560px;top:165px;" width="14" height="16" viewBox="0 0 14 16"><defs><linearGradient id="pl" x1="0" y1="0" x2="1" y2="1"><stop offset="0" stop-color="#90d0ff"/><stop offset="1" stop-color="#1a5ab8"/></linearGradient></defs><path d="M2.5 2 C2.5 1 3.2 0.8 4 1.3 L12.3 7 C13 7.5 13 8.5 12.3 9 L4 14.7 C3.2 15.2 2.5 15 2.5 14 Z" fill="url(#pl)" stroke="#0f3a78" stroke-width="1"/></svg>
<svg class="r" style="left:580px;top:175px;" width="9" height="5" viewBox="0 0 9 5"><path d="M0.5 0.5 H8.5 L4.5 4.5 Z" fill="#3a3f45"/></svg>
<div class="r" style="left:595px;top:161px;width:1px;height:24px;background:linear-gradient(#c0d4ee,#a8c2e4);"></div>
<div class="r" style="left:596px;top:161px;width:1px;height:24px;background:rgba(255,255,255,.7);"></div>
<div class="r" style="left:620px;top:163px;width:198px;height:20px;border:1px solid #8fb4e4;background:#fff;border-radius:2px;"></div>
<svg class="r" style="left:626px;top:175px;" width="9" height="5" viewBox="0 0 9 5"><path d="M0.5 0.5 H8.5 L4.5 4.5 Z" fill="#3a3f45"/></svg>
<div class="t " style="top:166.64px;font-size:12px;color:#a2a8ae;left:641.00px;transform-origin:0 50%;transform:scaleX(0.87);">Rechercher dans la liste</div>
<svg class="r" style="left:799px;top:165px;" width="14" height="14" viewBox="0 0 14 14"><circle cx="5.5" cy="5.5" r="3.8" fill="none" stroke="#777" stroke-width="1.8"/><path d="M8 8 L12 12" stroke="#666" stroke-width="2.4" stroke-linecap="round"/></svg>
<div class="r" style="left:209px;top:186px;width:866px;height:20px;background:linear-gradient(#f9fbfe,#eef3fa 50%,#e2eaf5);border-top:1px solid #6e7e86;border-bottom:1px solid #6e848f;"></div>
<div class="r" style="left:209px;top:186px;width:23px;height:20px;background:#dde9f9;border-top:1px solid #6e7e86;border-bottom:1px solid #6e848f;"></div>
<div class="r" style="left:232px;top:186px;width:1px;height:19px;background:#8796a2;"></div>
<div class="r" style="left:323px;top:186px;width:1px;height:19px;background:#8796a2;"></div>
<div class="r" style="left:594px;top:186px;width:1px;height:19px;background:#8796a2;"></div>
<div class="r" style="left:744px;top:186px;width:1px;height:19px;background:#8796a2;"></div>
<div class="r" style="left:894px;top:186px;width:1px;height:19px;background:#8796a2;"></div>
<div class="r" style="left:961px;top:186px;width:1px;height:19px;background:#8796a2;"></div>
<div class="r" style="left:216px;top:191px;width:10px;height:10px;border:1px solid #d2d8de;border-radius:2px;background:linear-gradient(#f4f6f8,#e8ecf0);"></div>
<div class="t " style="top:190.14px;font-size:12px;color:#000;font-weight:bold;left:235.60px;transform-origin:0 50%;transform:scaleX(0.994);">N° de genre d</div>
<svg class="r" style="left:315px;top:192px;" width="7" height="5" viewBox="0 0 7 5"><path d="M0.5 4.5 L3.5 0.5 L6.5 4.5 Z" fill="#111"/></svg>
<div class="t " style="top:190.14px;font-size:12px;color:#111;left:58.50px;width:800px;text-align:center;transform-origin:50% 50%;transform:scaleX(0.87);">Désignation</div>
<div class="t " style="top:190.14px;font-size:12px;color:#111;left:269.50px;width:800px;text-align:center;transform-origin:50% 50%;transform:scaleX(0.87);">Type</div>
<div class="t " style="top:190.14px;font-size:12px;color:#111;left:419.50px;width:800px;text-align:center;transform-origin:50% 50%;transform:scaleX(0.87);">Maj. / déd.</div>
<div class="t " style="top:190.14px;font-size:12px;color:#111;left:528.00px;width:800px;text-align:center;transform-origin:50% 50%;transform:scaleX(0.87);">Statut</div>
<div class="r" style="left:962px;top:186px;width:113px;height:19px;overflow:hidden;">
<div class="t " style="top:4.14px;font-size:12px;color:#111;left:31.00px;transform-origin:0 50%;transform:scaleX(0.87);">Correction possible</div>
</div>
<div class="r" style="left:209px;top:206px;width:866px;height:23px;background:#fff;"></div>
<div class="r" style="left:232px;top:206px;width:1px;height:23px;background:#cdd3d8;"></div>
<div class="r" style="left:323px;top:206px;width:1px;height:23px;background:#cdd3d8;"></div>
<div class="r" style="left:594px;top:206px;width:1px;height:23px;background:#cdd3d8;"></div>
<div class="r" style="left:744px;top:206px;width:1px;height:23px;background:#cdd3d8;"></div>
<div class="r" style="left:894px;top:206px;width:1px;height:23px;background:#cdd3d8;"></div>
<div class="r" style="left:961px;top:206px;width:1px;height:23px;background:#cdd3d8;"></div>
<div class="r" style="left:234px;top:208px;width:88px;height:20px;background:linear-gradient(#f8f8f8,#efefef);border-radius:2px;"></div>
<svg class="r" style="left:235px;top:210px;" width="17" height="16" viewBox="0 0 17 16"><defs><linearGradient id="fu" x1="0" y1="0" x2="1" y2="0"><stop offset="0" stop-color="#e8e8e8"/><stop offset=".4" stop-color="#a8a8a8"/><stop offset="1" stop-color="#e0e0e0"/></linearGradient></defs><path d="M0.8 3 C0.8 0.5 13.5 0.5 13.5 3 L9 9 V14 C9 14.8 6 14.8 6 14 V9 Z" fill="url(#fu)" stroke="#b0b0b0" stroke-width=".5"/><ellipse cx="7.15" cy="3" rx="5.6" ry="1.5" fill="#f4f4f4"/><path d="M11 12 H15.5 L13.25 14.5 Z" fill="#fafafa" stroke="#b8b8b8" stroke-width=".6"/></svg>
<div class="r" style="left:253px;top:209px;width:67px;height:17px;border:1px solid #c6daf0;background:linear-gradient(#f3f3f3,#ebebeb);"></div>
<div class="r" style="left:325px;top:208px;width:268px;height:20px;background:linear-gradient(#f8f8f8,#efefef);border-radius:2px;"></div>
<svg class="r" style="left:326px;top:210px;" width="17" height="16" viewBox="0 0 17 16"><defs><linearGradient id="fu" x1="0" y1="0" x2="1" y2="0"><stop offset="0" stop-color="#e8e8e8"/><stop offset=".4" stop-color="#a8a8a8"/><stop offset="1" stop-color="#e0e0e0"/></linearGradient></defs><path d="M0.8 3 C0.8 0.5 13.5 0.5 13.5 3 L9 9 V14 C9 14.8 6 14.8 6 14 V9 Z" fill="url(#fu)" stroke="#b0b0b0" stroke-width=".5"/><ellipse cx="7.15" cy="3" rx="5.6" ry="1.5" fill="#f4f4f4"/><path d="M11 12 H15.5 L13.25 14.5 Z" fill="#fafafa" stroke="#b8b8b8" stroke-width=".6"/></svg>
<div class="r" style="left:344px;top:209px;width:247px;height:17px;border:1px solid #c6daf0;background:linear-gradient(#f3f3f3,#ebebeb);"></div>
<div class="r" style="left:596px;top:208px;width:147px;height:20px;background:linear-gradient(#f8f8f8,#efefef);border-radius:2px;"></div>
<svg class="r" style="left:597px;top:210px;" width="17" height="16" viewBox="0 0 17 16"><defs><linearGradient id="fu" x1="0" y1="0" x2="1" y2="0"><stop offset="0" stop-color="#e8e8e8"/><stop offset=".4" stop-color="#a8a8a8"/><stop offset="1" stop-color="#e0e0e0"/></linearGradient></defs><path d="M0.8 3 C0.8 0.5 13.5 0.5 13.5 3 L9 9 V14 C9 14.8 6 14.8 6 14 V9 Z" fill="url(#fu)" stroke="#b0b0b0" stroke-width=".5"/><ellipse cx="7.15" cy="3" rx="5.6" ry="1.5" fill="#f4f4f4"/><path d="M11 12 H15.5 L13.25 14.5 Z" fill="#fafafa" stroke="#b8b8b8" stroke-width=".6"/></svg>
<div class="r" style="left:615px;top:209px;width:126px;height:17px;border:1px solid #c6daf0;background:linear-gradient(#f3f3f3,#ebebeb);"></div>
<div class="r" style="left:746px;top:208px;width:147px;height:20px;background:linear-gradient(#f8f8f8,#efefef);border-radius:2px;"></div>
<svg class="r" style="left:747px;top:210px;" width="17" height="16" viewBox="0 0 17 16"><defs><linearGradient id="fu" x1="0" y1="0" x2="1" y2="0"><stop offset="0" stop-color="#e8e8e8"/><stop offset=".4" stop-color="#a8a8a8"/><stop offset="1" stop-color="#e0e0e0"/></linearGradient></defs><path d="M0.8 3 C0.8 0.5 13.5 0.5 13.5 3 L9 9 V14 C9 14.8 6 14.8 6 14 V9 Z" fill="url(#fu)" stroke="#b0b0b0" stroke-width=".5"/><ellipse cx="7.15" cy="3" rx="5.6" ry="1.5" fill="#f4f4f4"/><path d="M11 12 H15.5 L13.25 14.5 Z" fill="#fafafa" stroke="#b8b8b8" stroke-width=".6"/></svg>
<div class="r" style="left:765px;top:209px;width:126px;height:17px;border:1px solid #c6daf0;background:linear-gradient(#f3f3f3,#ebebeb);"></div>
<div class="r" style="left:896px;top:208px;width:64px;height:20px;background:linear-gradient(#f8f8f8,#efefef);border-radius:2px;"></div>
<svg class="r" style="left:897px;top:210px;" width="17" height="16" viewBox="0 0 17 16"><defs><linearGradient id="fu" x1="0" y1="0" x2="1" y2="0"><stop offset="0" stop-color="#e8e8e8"/><stop offset=".4" stop-color="#a8a8a8"/><stop offset="1" stop-color="#e0e0e0"/></linearGradient></defs><path d="M0.8 3 C0.8 0.5 13.5 0.5 13.5 3 L9 9 V14 C9 14.8 6 14.8 6 14 V9 Z" fill="url(#fu)" stroke="#b0b0b0" stroke-width=".5"/><ellipse cx="7.15" cy="3" rx="5.6" ry="1.5" fill="#f4f4f4"/><path d="M11 12 H15.5 L13.25 14.5 Z" fill="#fafafa" stroke="#b8b8b8" stroke-width=".6"/></svg>
<div class="r" style="left:915px;top:209px;width:43px;height:17px;border:1px solid #c6daf0;background:linear-gradient(#f3f3f3,#ebebeb);"></div>
<div class="r" style="left:963px;top:208px;width:111px;height:20px;background:linear-gradient(#f8f8f8,#efefef);border-radius:2px;"></div>
<svg class="r" style="left:964px;top:210px;" width="17" height="16" viewBox="0 0 17 16"><defs><linearGradient id="fu" x1="0" y1="0" x2="1" y2="0"><stop offset="0" stop-color="#e8e8e8"/><stop offset=".4" stop-color="#a8a8a8"/><stop offset="1" stop-color="#e0e0e0"/></linearGradient></defs><path d="M0.8 3 C0.8 0.5 13.5 0.5 13.5 3 L9 9 V14 C9 14.8 6 14.8 6 14 V9 Z" fill="url(#fu)" stroke="#b0b0b0" stroke-width=".5"/><ellipse cx="7.15" cy="3" rx="5.6" ry="1.5" fill="#f4f4f4"/><path d="M11 12 H15.5 L13.25 14.5 Z" fill="#fafafa" stroke="#b8b8b8" stroke-width=".6"/></svg>
<div class="r" style="left:982px;top:209px;width:94px;height:17px;border:1px solid #c6daf0;background:linear-gradient(#f3f3f3,#ebebeb);"></div>
<div class="r" style="left:209px;top:229px;width:866px;height:1px;background:#8fb4e4;"></div>
<div class="r" style="left:209px;top:230px;width:866px;height:2px;background:#f2f6fc;"></div>
<div class="r" style="left:209px;top:232px;width:866px;height:1px;background:#8fb4e4;"></div>
<div class="r" style="left:209px;top:233px;width:866px;height:479px;overflow:hidden;">
<div class="r" style="left:1px;top:17px;width:865px;height:1px;background:#a0a0a0;"></div>
<div class="r" style="left:23px;top:0px;width:1px;height:17px;background:#a0a0a0;"></div>
<div class="r" style="left:114px;top:0px;width:1px;height:17px;background:#a0a0a0;"></div>
<div class="r" style="left:385px;top:0px;width:1px;height:17px;background:#a0a0a0;"></div>
<div class="r" style="left:535px;top:0px;width:1px;height:17px;background:#a0a0a0;"></div>
<div class="r" style="left:685px;top:0px;width:1px;height:17px;background:#a0a0a0;"></div>
<div class="r" style="left:752px;top:0px;width:1px;height:17px;background:#a0a0a0;"></div>
<div class="r" style="left:7px;top:4px;width:10px;height:10px;border:1px solid #dedede;border-radius:2px;background:linear-gradient(#fbfbfb,#f0f0f0);"></div>
<div class="t " style="top:2.84px;font-size:12px;color:#000;right:755.40px;transform-origin:100% 50%;transform:scaleX(0.87);">70020</div>
<div class="t " style="top:2.84px;font-size:12px;color:#000;left:117.00px;transform-origin:0 50%;transform:scaleX(0.87);">Frais de repas forfaitaires pour déjeuner</div>
<div class="t " style="top:2.84px;font-size:12px;color:#000;left:388.50px;transform-origin:0 50%;transform:scaleX(0.87);">Genre de salaire de calcul</div>
<div class="t " style="top:2.84px;font-size:12px;color:#000;left:538.50px;transform-origin:0 50%;transform:scaleX(0.87);">Allocation supplémentaire</div>
<div class="t " style="top:2.84px;font-size:12px;color:#000;left:688.50px;transform-origin:0 50%;transform:scaleX(0.87);">Variable</div>
<div class="t " style="top:2.84px;font-size:12px;color:#000;left:755.50px;transform-origin:0 50%;transform:scaleX(0.87);">Facteur</div>
<div class="r" style="left:1px;top:35px;width:865px;height:1px;background:#a0a0a0;"></div>
<div class="r" style="left:23px;top:18px;width:1px;height:17px;background:#a0a0a0;"></div>
<div class="r" style="left:114px;top:18px;width:1px;height:17px;background:#a0a0a0;"></div>
<div class="r" style="left:385px;top:18px;width:1px;height:17px;background:#a0a0a0;"></div>
<div class="r" style="left:535px;top:18px;width:1px;height:17px;background:#a0a0a0;"></div>
<div class="r" style="left:685px;top:18px;width:1px;height:17px;background:#a0a0a0;"></div>
<div class="r" style="left:752px;top:18px;width:1px;height:17px;background:#a0a0a0;"></div>
<div class="r" style="left:7px;top:22px;width:10px;height:10px;border:1px solid #dedede;border-radius:2px;background:linear-gradient(#fbfbfb,#f0f0f0);"></div>
<div class="t " style="top:20.84px;font-size:12px;color:#000;right:755.40px;transform-origin:100% 50%;transform:scaleX(0.87);">70030</div>
<div class="t " style="top:20.84px;font-size:12px;color:#000;left:117.00px;transform-origin:0 50%;transform:scaleX(0.87);">Frais de repas forfaitaires pour dîner</div>
<div class="t " style="top:20.84px;font-size:12px;color:#000;left:388.50px;transform-origin:0 50%;transform:scaleX(0.87);">Genre de salaire de calcul</div>
<div class="t " style="top:20.84px;font-size:12px;color:#000;left:538.50px;transform-origin:0 50%;transform:scaleX(0.87);">Allocation supplémentaire</div>
<div class="t " style="top:20.84px;font-size:12px;color:#000;left:688.50px;transform-origin:0 50%;transform:scaleX(0.87);">Variable</div>
<div class="t " style="top:20.84px;font-size:12px;color:#000;left:755.50px;transform-origin:0 50%;transform:scaleX(0.87);">Facteur</div>
<div class="r" style="left:1px;top:53px;width:865px;height:1px;background:#a0a0a0;"></div>
<div class="r" style="left:23px;top:36px;width:1px;height:17px;background:#a0a0a0;"></div>
<div class="r" style="left:114px;top:36px;width:1px;height:17px;background:#a0a0a0;"></div>
<div class="r" style="left:385px;top:36px;width:1px;height:17px;background:#a0a0a0;"></div>
<div class="r" style="left:535px;top:36px;width:1px;height:17px;background:#a0a0a0;"></div>
<div class="r" style="left:685px;top:36px;width:1px;height:17px;background:#a0a0a0;"></div>
<div class="r" style="left:752px;top:36px;width:1px;height:17px;background:#a0a0a0;"></div>
<div class="r" style="left:7px;top:40px;width:10px;height:10px;border:1px solid #dedede;border-radius:2px;background:linear-gradient(#fbfbfb,#f0f0f0);"></div>
<div class="t " style="top:38.84px;font-size:12px;color:#000;right:755.40px;transform-origin:100% 50%;transform:scaleX(0.87);">70100</div>
<div class="t " style="top:38.84px;font-size:12px;color:#000;left:117.00px;transform-origin:0 50%;transform:scaleX(0.87);">Frais effectifs de voyage avec justificatif</div>
<div class="t " style="top:38.84px;font-size:12px;color:#000;left:388.50px;transform-origin:0 50%;transform:scaleX(0.87);">Genre de salaire de calcul</div>
<div class="t " style="top:38.84px;font-size:12px;color:#000;left:538.50px;transform-origin:0 50%;transform:scaleX(0.87);">Allocation supplémentaire</div>
<div class="t " style="top:38.84px;font-size:12px;color:#000;left:688.50px;transform-origin:0 50%;transform:scaleX(0.87);">Variable</div>
<div class="t " style="top:38.84px;font-size:12px;color:#000;left:755.50px;transform-origin:0 50%;transform:scaleX(0.87);">Évaluation</div>
<div class="r" style="left:1px;top:71px;width:865px;height:1px;background:#a0a0a0;"></div>
<div class="r" style="left:23px;top:54px;width:1px;height:17px;background:#a0a0a0;"></div>
<div class="r" style="left:114px;top:54px;width:1px;height:17px;background:#a0a0a0;"></div>
<div class="r" style="left:385px;top:54px;width:1px;height:17px;background:#a0a0a0;"></div>
<div class="r" style="left:535px;top:54px;width:1px;height:17px;background:#a0a0a0;"></div>
<div class="r" style="left:685px;top:54px;width:1px;height:17px;background:#a0a0a0;"></div>
<div class="r" style="left:752px;top:54px;width:1px;height:17px;background:#a0a0a0;"></div>
<div class="r" style="left:7px;top:58px;width:10px;height:10px;border:1px solid #dedede;border-radius:2px;background:linear-gradient(#fbfbfb,#f0f0f0);"></div>
<div class="t " style="top:56.84px;font-size:12px;color:#000;right:755.40px;transform-origin:100% 50%;transform:scaleX(0.87);">70110</div>
<div class="t " style="top:56.84px;font-size:12px;color:#000;left:117.00px;transform-origin:0 50%;transform:scaleX(0.87);">Frais effectifs de voyage par km</div>
<div class="t " style="top:56.84px;font-size:12px;color:#000;left:388.50px;transform-origin:0 50%;transform:scaleX(0.87);">Genre de salaire de calcul</div>
<div class="t " style="top:56.84px;font-size:12px;color:#000;left:538.50px;transform-origin:0 50%;transform:scaleX(0.87);">Allocation supplémentaire</div>
<div class="t " style="top:56.84px;font-size:12px;color:#000;left:688.50px;transform-origin:0 50%;transform:scaleX(0.87);">Variable</div>
<div class="t " style="top:56.84px;font-size:12px;color:#000;left:755.50px;transform-origin:0 50%;transform:scaleX(0.87);">Facteur</div>
<div class="r" style="left:1px;top:89px;width:865px;height:1px;background:#a0a0a0;"></div>
<div class="r" style="left:23px;top:72px;width:1px;height:17px;background:#a0a0a0;"></div>
<div class="r" style="left:114px;top:72px;width:1px;height:17px;background:#a0a0a0;"></div>
<div class="r" style="left:385px;top:72px;width:1px;height:17px;background:#a0a0a0;"></div>
<div class="r" style="left:535px;top:72px;width:1px;height:17px;background:#a0a0a0;"></div>
<div class="r" style="left:685px;top:72px;width:1px;height:17px;background:#a0a0a0;"></div>
<div class="r" style="left:752px;top:72px;width:1px;height:17px;background:#a0a0a0;"></div>
<div class="r" style="left:7px;top:76px;width:10px;height:10px;border:1px solid #dedede;border-radius:2px;background:linear-gradient(#fbfbfb,#f0f0f0);"></div>
<div class="t " style="top:74.84px;font-size:12px;color:#000;right:755.40px;transform-origin:100% 50%;transform:scaleX(0.87);">70200</div>
<div class="t " style="top:74.84px;font-size:12px;color:#000;left:117.00px;transform-origin:0 50%;transform:scaleX(0.87);">Frais effectifs de nuitées avec justificatif</div>
<div class="t " style="top:74.84px;font-size:12px;color:#000;left:388.50px;transform-origin:0 50%;transform:scaleX(0.87);">Genre de salaire de calcul</div>
<div class="t " style="top:74.84px;font-size:12px;color:#000;left:538.50px;transform-origin:0 50%;transform:scaleX(0.87);">Allocation supplémentaire</div>
<div class="t " style="top:74.84px;font-size:12px;color:#000;left:688.50px;transform-origin:0 50%;transform:scaleX(0.87);">Variable</div>
<div class="t " style="top:74.84px;font-size:12px;color:#000;left:755.50px;transform-origin:0 50%;transform:scaleX(0.87);">Évaluation</div>
<div class="r" style="left:1px;top:107px;width:865px;height:1px;background:#a0a0a0;"></div>
<div class="r" style="left:23px;top:90px;width:1px;height:17px;background:#a0a0a0;"></div>
<div class="r" style="left:114px;top:90px;width:1px;height:17px;background:#a0a0a0;"></div>
<div class="r" style="left:385px;top:90px;width:1px;height:17px;background:#a0a0a0;"></div>
<div class="r" style="left:535px;top:90px;width:1px;height:17px;background:#a0a0a0;"></div>
<div class="r" style="left:685px;top:90px;width:1px;height:17px;background:#a0a0a0;"></div>
<div class="r" style="left:752px;top:90px;width:1px;height:17px;background:#a0a0a0;"></div>
<div class="r" style="left:7px;top:94px;width:10px;height:10px;border:1px solid #dedede;border-radius:2px;background:linear-gradient(#fbfbfb,#f0f0f0);"></div>
<div class="t " style="top:92.84px;font-size:12px;color:#000;right:755.40px;transform-origin:100% 50%;transform:scaleX(0.87);">70300</div>
<div class="t " style="top:92.84px;font-size:12px;color:#000;left:117.00px;transform-origin:0 50%;transform:scaleX(0.87);">Autres frais effectifs avec justificatif</div>
<div class="t " style="top:92.84px;font-size:12px;color:#000;left:388.50px;transform-origin:0 50%;transform:scaleX(0.87);">Genre de salaire de calcul</div>
<div class="t " style="top:92.84px;font-size:12px;color:#000;left:538.50px;transform-origin:0 50%;transform:scaleX(0.87);">Allocation supplémentaire</div>
<div class="t " style="top:92.84px;font-size:12px;color:#000;left:688.50px;transform-origin:0 50%;transform:scaleX(0.87);">Variable</div>
<div class="t " style="top:92.84px;font-size:12px;color:#000;left:755.50px;transform-origin:0 50%;transform:scaleX(0.87);">Évaluation</div>
<div class="r" style="left:1px;top:125px;width:865px;height:1px;background:#a0a0a0;"></div>
<div class="r" style="left:23px;top:108px;width:1px;height:17px;background:#a0a0a0;"></div>
<div class="r" style="left:114px;top:108px;width:1px;height:17px;background:#a0a0a0;"></div>
<div class="r" style="left:385px;top:108px;width:1px;height:17px;background:#a0a0a0;"></div>
<div class="r" style="left:535px;top:108px;width:1px;height:17px;background:#a0a0a0;"></div>
<div class="r" style="left:685px;top:108px;width:1px;height:17px;background:#a0a0a0;"></div>
<div class="r" style="left:752px;top:108px;width:1px;height:17px;background:#a0a0a0;"></div>
<div class="r" style="left:7px;top:112px;width:10px;height:10px;border:1px solid #dedede;border-radius:2px;background:linear-gradient(#fbfbfb,#f0f0f0);"></div>
<div class="t " style="top:110.84px;font-size:12px;color:#000;right:755.40px;transform-origin:100% 50%;transform:scaleX(0.87);">70400</div>
<div class="t " style="top:110.84px;font-size:12px;color:#000;left:117.00px;transform-origin:0 50%;transform:scaleX(0.87);">Frais effectifs avec justificatif expatriés</div>
<div class="t " style="top:110.84px;font-size:12px;color:#000;left:388.50px;transform-origin:0 50%;transform:scaleX(0.87);">Genre de salaire de calcul</div>
<div class="t " style="top:110.84px;font-size:12px;color:#000;left:538.50px;transform-origin:0 50%;transform:scaleX(0.87);">Allocation supplémentaire</div>
<div class="t " style="top:110.84px;font-size:12px;color:#000;left:688.50px;transform-origin:0 50%;transform:scaleX(0.87);">Variable</div>
<div class="t " style="top:110.84px;font-size:12px;color:#000;left:755.50px;transform-origin:0 50%;transform:scaleX(0.87);">Évaluation</div>
<div class="r" style="left:1px;top:143px;width:865px;height:1px;background:#a0a0a0;"></div>
<div class="r" style="left:23px;top:126px;width:1px;height:17px;background:#a0a0a0;"></div>
<div class="r" style="left:114px;top:126px;width:1px;height:17px;background:#a0a0a0;"></div>
<div class="r" style="left:385px;top:126px;width:1px;height:17px;background:#a0a0a0;"></div>
<div class="r" style="left:535px;top:126px;width:1px;height:17px;background:#a0a0a0;"></div>
<div class="r" style="left:685px;top:126px;width:1px;height:17px;background:#a0a0a0;"></div>
<div class="r" style="left:752px;top:126px;width:1px;height:17px;background:#a0a0a0;"></div>
<div class="r" style="left:7px;top:130px;width:10px;height:10px;border:1px solid #dedede;border-radius:2px;background:linear-gradient(#fbfbfb,#f0f0f0);"></div>
<div class="t " style="top:128.84px;font-size:12px;color:#000;right:755.40px;transform-origin:100% 50%;transform:scaleX(0.87);">70450</div>
<div class="t " style="top:128.84px;font-size:12px;color:#000;left:117.00px;transform-origin:0 50%;transform:scaleX(0.87);">Frais forfaitaires expatriés</div>
<div class="t " style="top:128.84px;font-size:12px;color:#000;left:388.50px;transform-origin:0 50%;transform:scaleX(0.87);">Genre de salaire de calcul</div>
<div class="t " style="top:128.84px;font-size:12px;color:#000;left:538.50px;transform-origin:0 50%;transform:scaleX(0.87);">Allocation supplémentaire</div>
<div class="t " style="top:128.84px;font-size:12px;color:#000;left:688.50px;transform-origin:0 50%;transform:scaleX(0.87);">Automatique</div>
<div class="t " style="top:128.84px;font-size:12px;color:#000;left:755.50px;transform-origin:0 50%;transform:scaleX(0.87);">Évaluation</div>
<div class="r" style="left:1px;top:161px;width:865px;height:1px;background:#a0a0a0;"></div>
<div class="r" style="left:23px;top:144px;width:1px;height:17px;background:#a0a0a0;"></div>
<div class="r" style="left:114px;top:144px;width:1px;height:17px;background:#a0a0a0;"></div>
<div class="r" style="left:385px;top:144px;width:1px;height:17px;background:#a0a0a0;"></div>
<div class="r" style="left:535px;top:144px;width:1px;height:17px;background:#a0a0a0;"></div>
<div class="r" style="left:685px;top:144px;width:1px;height:17px;background:#a0a0a0;"></div>
<div class="r" style="left:752px;top:144px;width:1px;height:17px;background:#a0a0a0;"></div>
<div class="r" style="left:7px;top:148px;width:10px;height:10px;border:1px solid #dedede;border-radius:2px;background:linear-gradient(#fbfbfb,#f0f0f0);"></div>
<div class="t " style="top:146.84px;font-size:12px;color:#000;right:755.40px;transform-origin:100% 50%;transform:scaleX(0.87);">70500</div>
<div class="t " style="top:146.84px;font-size:12px;color:#000;left:117.00px;transform-origin:0 50%;transform:scaleX(0.87);">Frais forfaitaires de représentation</div>
<div class="t " style="top:146.84px;font-size:12px;color:#000;left:388.50px;transform-origin:0 50%;transform:scaleX(0.87);">Genre de salaire de calcul</div>
<div class="t " style="top:146.84px;font-size:12px;color:#000;left:538.50px;transform-origin:0 50%;transform:scaleX(0.87);">Allocation supplémentaire</div>
<div class="t " style="top:146.84px;font-size:12px;color:#000;left:688.50px;transform-origin:0 50%;transform:scaleX(0.87);">Automatique</div>
<div class="t " style="top:146.84px;font-size:12px;color:#000;left:755.50px;transform-origin:0 50%;transform:scaleX(0.87);">Évaluation</div>
<div class="r" style="left:1px;top:179px;width:865px;height:1px;background:#a0a0a0;"></div>
<div class="r" style="left:23px;top:162px;width:1px;height:17px;background:#a0a0a0;"></div>
<div class="r" style="left:114px;top:162px;width:1px;height:17px;background:#a0a0a0;"></div>
<div class="r" style="left:385px;top:162px;width:1px;height:17px;background:#a0a0a0;"></div>
<div class="r" style="left:535px;top:162px;width:1px;height:17px;background:#a0a0a0;"></div>
<div class="r" style="left:685px;top:162px;width:1px;height:17px;background:#a0a0a0;"></div>
<div class="r" style="left:752px;top:162px;width:1px;height:17px;background:#a0a0a0;"></div>
<div class="r" style="left:7px;top:166px;width:10px;height:10px;border:1px solid #dedede;border-radius:2px;background:linear-gradient(#fbfbfb,#f0f0f0);"></div>
<div class="t " style="top:164.84px;font-size:12px;color:#000;right:755.40px;transform-origin:100% 50%;transform:scaleX(0.87);">70600</div>
<div class="t " style="top:164.84px;font-size:12px;color:#000;left:117.00px;transform-origin:0 50%;transform:scaleX(0.87);">Frais forfaitaires de voiture</div>
<div class="t " style="top:164.84px;font-size:12px;color:#000;left:388.50px;transform-origin:0 50%;transform:scaleX(0.87);">Genre de salaire de calcul</div>
<div class="t " style="top:164.84px;font-size:12px;color:#000;left:538.50px;transform-origin:0 50%;transform:scaleX(0.87);">Allocation supplémentaire</div>
<div class="t " style="top:164.84px;font-size:12px;color:#000;left:688.50px;transform-origin:0 50%;transform:scaleX(0.87);">Automatique</div>
<div class="t " style="top:164.84px;font-size:12px;color:#000;left:755.50px;transform-origin:0 50%;transform:scaleX(0.87);">Évaluation</div>
<div class="r" style="left:1px;top:197px;width:865px;height:1px;background:#a0a0a0;"></div>
<div class="r" style="left:23px;top:180px;width:1px;height:17px;background:#a0a0a0;"></div>
<div class="r" style="left:114px;top:180px;width:1px;height:17px;background:#a0a0a0;"></div>
<div class="r" style="left:385px;top:180px;width:1px;height:17px;background:#a0a0a0;"></div>
<div class="r" style="left:535px;top:180px;width:1px;height:17px;background:#a0a0a0;"></div>
<div class="r" style="left:685px;top:180px;width:1px;height:17px;background:#a0a0a0;"></div>
<div class="r" style="left:752px;top:180px;width:1px;height:17px;background:#a0a0a0;"></div>
<div class="r" style="left:7px;top:184px;width:10px;height:10px;border:1px solid #dedede;border-radius:2px;background:linear-gradient(#fbfbfb,#f0f0f0);"></div>
<div class="t " style="top:182.84px;font-size:12px;color:#000;right:755.40px;transform-origin:100% 50%;transform:scaleX(0.87);">70700</div>
<div class="t " style="top:182.84px;font-size:12px;color:#000;left:117.00px;transform-origin:0 50%;transform:scaleX(0.87);">Autres frais forfaitaires</div>
<div class="t " style="top:182.84px;font-size:12px;color:#000;left:388.50px;transform-origin:0 50%;transform:scaleX(0.87);">Genre de salaire de calcul</div>
<div class="t " style="top:182.84px;font-size:12px;color:#000;left:538.50px;transform-origin:0 50%;transform:scaleX(0.87);">Allocation supplémentaire</div>
<div class="t " style="top:182.84px;font-size:12px;color:#000;left:688.50px;transform-origin:0 50%;transform:scaleX(0.87);">Automatique</div>
<div class="t " style="top:182.84px;font-size:12px;color:#000;left:755.50px;transform-origin:0 50%;transform:scaleX(0.87);">Évaluation</div>
<div class="r" style="left:1px;top:215px;width:865px;height:1px;background:#a0a0a0;"></div>
<div class="r" style="left:23px;top:198px;width:1px;height:17px;background:#a0a0a0;"></div>
<div class="r" style="left:114px;top:198px;width:1px;height:17px;background:#a0a0a0;"></div>
<div class="r" style="left:385px;top:198px;width:1px;height:17px;background:#a0a0a0;"></div>
<div class="r" style="left:535px;top:198px;width:1px;height:17px;background:#a0a0a0;"></div>
<div class="r" style="left:685px;top:198px;width:1px;height:17px;background:#a0a0a0;"></div>
<div class="r" style="left:752px;top:198px;width:1px;height:17px;background:#a0a0a0;"></div>
<div class="r" style="left:7px;top:202px;width:10px;height:10px;border:1px solid #dedede;border-radius:2px;background:linear-gradient(#fbfbfb,#f0f0f0);"></div>
<div class="t " style="top:200.84px;font-size:12px;color:#000;right:755.40px;transform-origin:100% 50%;transform:scaleX(0.87);">71100</div>
<div class="t " style="top:200.84px;font-size:12px;color:#000;left:117.00px;transform-origin:0 50%;transform:scaleX(0.87);">Déduction part privée voiture de service</div>
<div class="t " style="top:200.84px;font-size:12px;color:#000;left:388.50px;transform-origin:0 50%;transform:scaleX(0.87);">Genre de salaire de calcul</div>
<div class="t " style="top:200.84px;font-size:12px;color:#000;left:538.50px;transform-origin:0 50%;transform:scaleX(0.87);">Déduction</div>
<div class="t " style="top:200.84px;font-size:12px;color:#000;left:688.50px;transform-origin:0 50%;transform:scaleX(0.87);">Automatique</div>
<div class="t " style="top:200.84px;font-size:12px;color:#000;left:755.50px;transform-origin:0 50%;transform:scaleX(0.87);">Ne peut pas être corrigé</div>
<div class="r" style="left:1px;top:216px;width:865px;height:17px;background:#3399ff;"></div>
<div class="r" style="left:115px;top:216px;width:270px;height:17px;background:#efefef;border:1px solid #a9d3fb;"></div>
<div class="r" style="left:1px;top:233px;width:865px;height:1px;background:#a0a0a0;"></div>
<div class="r" style="left:23px;top:216px;width:1px;height:17px;background:#a0a0a0;"></div>
<div class="r" style="left:114px;top:216px;width:1px;height:17px;background:#a0a0a0;"></div>
<div class="r" style="left:385px;top:216px;width:1px;height:17px;background:#a0a0a0;"></div>
<div class="r" style="left:535px;top:216px;width:1px;height:17px;background:#a0a0a0;"></div>
<div class="r" style="left:685px;top:216px;width:1px;height:17px;background:#a0a0a0;"></div>
<div class="r" style="left:752px;top:216px;width:1px;height:17px;background:#a0a0a0;"></div>
<svg class="r" style="left:5px;top:218px;" width="14" height="14" viewBox="0 0 14 14"><path d="M1.5 7.5 L5.5 12 L12.5 2" fill="none" stroke="#1e5a10" stroke-width="3.2" stroke-linejoin="round"/><path d="M1.5 7.5 L5.5 12 L12.5 2" fill="none" stroke="#5cc040" stroke-width="1.8" stroke-linejoin="round"/></svg>
<div class="t " style="top:218.84px;font-size:12px;color:#fff;right:755.40px;transform-origin:100% 50%;transform:scaleX(0.87);">72000</div>
<div class="t " style="top:218.84px;font-size:12px;color:#000;left:117.00px;transform-origin:0 50%;transform:scaleX(0.87);">Correction prestations en nature</div>
<div class="t " style="top:218.84px;font-size:12px;color:#fff;left:388.50px;transform-origin:0 50%;transform:scaleX(0.87);">Genre de salaire de calcul</div>
<div class="t " style="top:218.84px;font-size:12px;color:#fff;left:538.50px;transform-origin:0 50%;transform:scaleX(0.87);">Déduction</div>
<div class="t " style="top:218.84px;font-size:12px;color:#fff;left:688.50px;transform-origin:0 50%;transform:scaleX(0.87);">Automatique</div>
<div class="t " style="top:218.84px;font-size:12px;color:#fff;left:755.50px;transform-origin:0 50%;transform:scaleX(0.87);">Ne peut pas être corrigé</div>
<div class="r" style="left:1px;top:251px;width:865px;height:1px;background:#a0a0a0;"></div>
<div class="r" style="left:23px;top:234px;width:1px;height:17px;background:#a0a0a0;"></div>
<div class="r" style="left:114px;top:234px;width:1px;height:17px;background:#a0a0a0;"></div>
<div class="r" style="left:385px;top:234px;width:1px;height:17px;background:#a0a0a0;"></div>
<div class="r" style="left:535px;top:234px;width:1px;height:17px;background:#a0a0a0;"></div>
<div class="r" style="left:685px;top:234px;width:1px;height:17px;background:#a0a0a0;"></div>
<div class="r" style="left:752px;top:234px;width:1px;height:17px;background:#a0a0a0;"></div>
<div class="r" style="left:7px;top:238px;width:10px;height:10px;border:1px solid #dedede;border-radius:2px;background:linear-gradient(#fbfbfb,#f0f0f0);"></div>
<div class="t " style="top:236.84px;font-size:12px;color:#000;right:755.40px;transform-origin:100% 50%;transform:scaleX(0.87);">74000</div>
<div class="t " style="top:236.84px;font-size:12px;color:#000;left:117.00px;transform-origin:0 50%;transform:scaleX(0.87);">Remboursement de perfectionnement</div>
<div class="t " style="top:236.84px;font-size:12px;color:#000;left:388.50px;transform-origin:0 50%;transform:scaleX(0.87);">Genre de salaire de calcul</div>
<div class="t " style="top:236.84px;font-size:12px;color:#000;left:538.50px;transform-origin:0 50%;transform:scaleX(0.87);">Allocation supplémentaire</div>
<div class="t " style="top:236.84px;font-size:12px;color:#000;left:688.50px;transform-origin:0 50%;transform:scaleX(0.87);">Variable</div>
<div class="t " style="top:236.84px;font-size:12px;color:#000;left:755.50px;transform-origin:0 50%;transform:scaleX(0.87);">Évaluation</div>
<div class="r" style="left:1px;top:269px;width:865px;height:1px;background:#a0a0a0;"></div>
<div class="r" style="left:23px;top:252px;width:1px;height:17px;background:#a0a0a0;"></div>
<div class="r" style="left:114px;top:252px;width:1px;height:17px;background:#a0a0a0;"></div>
<div class="r" style="left:385px;top:252px;width:1px;height:17px;background:#a0a0a0;"></div>
<div class="r" style="left:535px;top:252px;width:1px;height:17px;background:#a0a0a0;"></div>
<div class="r" style="left:685px;top:252px;width:1px;height:17px;background:#a0a0a0;"></div>
<div class="r" style="left:752px;top:252px;width:1px;height:17px;background:#a0a0a0;"></div>
<div class="r" style="left:7px;top:256px;width:10px;height:10px;border:1px solid #dedede;border-radius:2px;background:linear-gradient(#fbfbfb,#f0f0f0);"></div>
<div class="t " style="top:254.84px;font-size:12px;color:#000;right:755.40px;transform-origin:100% 50%;transform:scaleX(0.87);">74050</div>
<div class="t " style="top:254.84px;font-size:12px;color:#000;left:117.00px;transform-origin:0 50%;transform:scaleX(0.87);">Perfectionnement certificat de salaire</div>
<div class="t " style="top:254.84px;font-size:12px;color:#000;left:388.50px;transform-origin:0 50%;transform:scaleX(0.87);">Genre de salaire accessoire</div>
<div class="t " style="top:254.84px;font-size:12px;color:#000;left:538.50px;transform-origin:0 50%;transform:scaleX(0.87);">Allocation supplémentaire</div>
<div class="t " style="top:254.84px;font-size:12px;color:#000;left:688.50px;transform-origin:0 50%;transform:scaleX(0.87);">Variable</div>
<div class="t " style="top:254.84px;font-size:12px;color:#000;left:755.50px;transform-origin:0 50%;transform:scaleX(0.87);">Évaluation</div>
<div class="r" style="left:1px;top:287px;width:865px;height:1px;background:#a0a0a0;"></div>
<div class="r" style="left:23px;top:270px;width:1px;height:17px;background:#a0a0a0;"></div>
<div class="r" style="left:114px;top:270px;width:1px;height:17px;background:#a0a0a0;"></div>
<div class="r" style="left:385px;top:270px;width:1px;height:17px;background:#a0a0a0;"></div>
<div class="r" style="left:535px;top:270px;width:1px;height:17px;background:#a0a0a0;"></div>
<div class="r" style="left:685px;top:270px;width:1px;height:17px;background:#a0a0a0;"></div>
<div class="r" style="left:752px;top:270px;width:1px;height:17px;background:#a0a0a0;"></div>
<div class="r" style="left:7px;top:274px;width:10px;height:10px;border:1px solid #dedede;border-radius:2px;background:linear-gradient(#fbfbfb,#f0f0f0);"></div>
<div class="t " style="top:272.84px;font-size:12px;color:#000;right:755.40px;transform-origin:100% 50%;transform:scaleX(0.87);">78000</div>
<div class="t " style="top:272.84px;font-size:12px;color:#000;left:117.00px;transform-origin:0 50%;transform:scaleX(0.87);">Déduction acompte</div>
<div class="t " style="top:272.84px;font-size:12px;color:#000;left:388.50px;transform-origin:0 50%;transform:scaleX(0.87);">Genre de salaire de calcul</div>
<div class="t " style="top:272.84px;font-size:12px;color:#000;left:538.50px;transform-origin:0 50%;transform:scaleX(0.87);">Déduction</div>
<div class="t " style="top:272.84px;font-size:12px;color:#000;left:688.50px;transform-origin:0 50%;transform:scaleX(0.87);">Variable</div>
<div class="t " style="top:272.84px;font-size:12px;color:#000;left:755.50px;transform-origin:0 50%;transform:scaleX(0.87);">Évaluation</div>
<div class="r" style="left:1px;top:305px;width:865px;height:1px;background:#a0a0a0;"></div>
<div class="r" style="left:23px;top:288px;width:1px;height:17px;background:#a0a0a0;"></div>
<div class="r" style="left:114px;top:288px;width:1px;height:17px;background:#a0a0a0;"></div>
<div class="r" style="left:385px;top:288px;width:1px;height:17px;background:#a0a0a0;"></div>
<div class="r" style="left:535px;top:288px;width:1px;height:17px;background:#a0a0a0;"></div>
<div class="r" style="left:685px;top:288px;width:1px;height:17px;background:#a0a0a0;"></div>
<div class="r" style="left:752px;top:288px;width:1px;height:17px;background:#a0a0a0;"></div>
<div class="r" style="left:7px;top:292px;width:10px;height:10px;border:1px solid #dedede;border-radius:2px;background:linear-gradient(#fbfbfb,#f0f0f0);"></div>
<div class="t " style="top:290.84px;font-size:12px;color:#000;right:755.40px;transform-origin:100% 50%;transform:scaleX(0.87);">78500</div>
<div class="t " style="top:290.84px;font-size:12px;color:#000;left:117.00px;transform-origin:0 50%;transform:scaleX(0.87);">Déduction du virement automatique</div>
<div class="t " style="top:290.84px;font-size:12px;color:#000;left:388.50px;transform-origin:0 50%;transform:scaleX(0.87);">Genre de salaire de calcul</div>
<div class="t " style="top:290.84px;font-size:12px;color:#000;left:538.50px;transform-origin:0 50%;transform:scaleX(0.87);">Déduction</div>
<div class="t " style="top:290.84px;font-size:12px;color:#000;left:688.50px;transform-origin:0 50%;transform:scaleX(0.87);">Automatique</div>
<div class="t " style="top:290.84px;font-size:12px;color:#000;left:755.50px;transform-origin:0 50%;transform:scaleX(0.87);">Évaluation</div>
<div class="r" style="left:1px;top:323px;width:865px;height:1px;background:#a0a0a0;"></div>
<div class="r" style="left:23px;top:306px;width:1px;height:17px;background:#a0a0a0;"></div>
<div class="r" style="left:114px;top:306px;width:1px;height:17px;background:#a0a0a0;"></div>
<div class="r" style="left:385px;top:306px;width:1px;height:17px;background:#a0a0a0;"></div>
<div class="r" style="left:535px;top:306px;width:1px;height:17px;background:#a0a0a0;"></div>
<div class="r" style="left:685px;top:306px;width:1px;height:17px;background:#a0a0a0;"></div>
<div class="r" style="left:752px;top:306px;width:1px;height:17px;background:#a0a0a0;"></div>
<div class="r" style="left:7px;top:310px;width:10px;height:10px;border:1px solid #dedede;border-radius:2px;background:linear-gradient(#fbfbfb,#f0f0f0);"></div>
<div class="t " style="top:308.84px;font-size:12px;color:#000;right:755.40px;transform-origin:100% 50%;transform:scaleX(0.87);">79990</div>
<div class="t " style="top:308.84px;font-size:12px;color:#000;left:117.00px;transform-origin:0 50%;transform:scaleX(0.87);">Déduction salaire négatif mois précedent</div>
<div class="t " style="top:308.84px;font-size:12px;color:#000;left:388.50px;transform-origin:0 50%;transform:scaleX(0.87);">Genre de salaire de calcul</div>
<div class="t " style="top:308.84px;font-size:12px;color:#000;left:538.50px;transform-origin:0 50%;transform:scaleX(0.87);">Déduction</div>
<div class="t " style="top:308.84px;font-size:12px;color:#000;left:688.50px;transform-origin:0 50%;transform:scaleX(0.87);">Automatique</div>
<div class="t " style="top:308.84px;font-size:12px;color:#000;left:755.50px;transform-origin:0 50%;transform:scaleX(0.87);">Ne peut pas être corrigé</div>
<div class="r" style="left:24px;top:324px;width:842px;height:17px;background:#fafa9c;"></div>
<div class="r" style="left:1px;top:341px;width:865px;height:1px;background:#a0a0a0;"></div>
<div class="r" style="left:23px;top:324px;width:1px;height:17px;background:#a0a0a0;"></div>
<div class="r" style="left:114px;top:324px;width:1px;height:17px;background:#a0a0a0;"></div>
<div class="r" style="left:385px;top:324px;width:1px;height:17px;background:#a0a0a0;"></div>
<div class="r" style="left:535px;top:324px;width:1px;height:17px;background:#a0a0a0;"></div>
<div class="r" style="left:685px;top:324px;width:1px;height:17px;background:#a0a0a0;"></div>
<div class="r" style="left:752px;top:324px;width:1px;height:17px;background:#a0a0a0;"></div>
<div class="r" style="left:7px;top:328px;width:10px;height:10px;border:1px solid #dedede;border-radius:2px;background:linear-gradient(#fbfbfb,#f0f0f0);"></div>
<div class="t " style="top:326.84px;font-size:12px;color:#000;right:755.40px;transform-origin:100% 50%;transform:scaleX(0.87);">80000</div>
<div class="t " style="top:326.84px;font-size:12px;color:#000;left:117.00px;transform-origin:0 50%;transform:scaleX(0.87);">PAIEMENT</div>
<div class="t " style="top:326.84px;font-size:12px;color:#000;left:388.50px;transform-origin:0 50%;transform:scaleX(0.87);">Genre de salaire de versement</div>
<div class="t " style="top:326.84px;font-size:12px;color:#000;left:538.50px;transform-origin:0 50%;transform:scaleX(0.87);">Allocation supplémentaire</div>
<div class="t " style="top:326.84px;font-size:12px;color:#000;left:688.50px;transform-origin:0 50%;transform:scaleX(0.87);">Automatique</div>
<div class="t " style="top:326.84px;font-size:12px;color:#000;left:755.50px;transform-origin:0 50%;transform:scaleX(0.87);">Ne peut pas être corrigé</div>
<div class="r" style="left:1px;top:359px;width:865px;height:1px;background:#a0a0a0;"></div>
<div class="r" style="left:23px;top:342px;width:1px;height:17px;background:#a0a0a0;"></div>
<div class="r" style="left:114px;top:342px;width:1px;height:17px;background:#a0a0a0;"></div>
<div class="r" style="left:385px;top:342px;width:1px;height:17px;background:#a0a0a0;"></div>
<div class="r" style="left:535px;top:342px;width:1px;height:17px;background:#a0a0a0;"></div>
<div class="r" style="left:685px;top:342px;width:1px;height:17px;background:#a0a0a0;"></div>
<div class="r" style="left:752px;top:342px;width:1px;height:17px;background:#a0a0a0;"></div>
<div class="r" style="left:7px;top:346px;width:10px;height:10px;border:1px solid #dedede;border-radius:2px;background:linear-gradient(#fbfbfb,#f0f0f0);"></div>
<div class="t " style="top:344.84px;font-size:12px;color:#000;right:755.40px;transform-origin:100% 50%;transform:scaleX(0.87);">80010</div>
<div class="t " style="top:344.84px;font-size:12px;color:#000;left:117.00px;transform-origin:0 50%;transform:scaleX(0.87);">GS auxiliaire paiement negatif</div>
<div class="t " style="top:344.84px;font-size:12px;color:#000;left:388.50px;transform-origin:0 50%;transform:scaleX(0.87);">Genre de salaire accessoire</div>
<div class="t " style="top:344.84px;font-size:12px;color:#000;left:538.50px;transform-origin:0 50%;transform:scaleX(0.87);">Allocation supplémentaire</div>
<div class="t " style="top:344.84px;font-size:12px;color:#000;left:688.50px;transform-origin:0 50%;transform:scaleX(0.87);">Automatique</div>
<div class="t " style="top:344.84px;font-size:12px;color:#000;left:755.50px;transform-origin:0 50%;transform:scaleX(0.87);">Ne peut pas être corrigé</div>
<div class="r" style="left:1px;top:377px;width:865px;height:1px;background:#a0a0a0;"></div>
<div class="r" style="left:23px;top:360px;width:1px;height:17px;background:#a0a0a0;"></div>
<div class="r" style="left:114px;top:360px;width:1px;height:17px;background:#a0a0a0;"></div>
<div class="r" style="left:385px;top:360px;width:1px;height:17px;background:#a0a0a0;"></div>
<div class="r" style="left:535px;top:360px;width:1px;height:17px;background:#a0a0a0;"></div>
<div class="r" style="left:685px;top:360px;width:1px;height:17px;background:#a0a0a0;"></div>
<div class="r" style="left:752px;top:360px;width:1px;height:17px;background:#a0a0a0;"></div>
<div class="r" style="left:7px;top:364px;width:10px;height:10px;border:1px solid #dedede;border-radius:2px;background:linear-gradient(#fbfbfb,#f0f0f0);"></div>
<div class="t " style="top:362.84px;font-size:12px;color:#000;right:755.40px;transform-origin:100% 50%;transform:scaleX(0.87);">81000</div>
<div class="t " style="top:362.84px;font-size:12px;color:#000;left:117.00px;transform-origin:0 50%;transform:scaleX(0.87);">Heures dues</div>
<div class="t " style="top:362.84px;font-size:12px;color:#000;left:388.50px;transform-origin:0 50%;transform:scaleX(0.87);">Genre de salaire accessoire</div>
<div class="t " style="top:362.84px;font-size:12px;color:#000;left:538.50px;transform-origin:0 50%;transform:scaleX(0.87);">Allocation supplémentaire</div>
<div class="t " style="top:362.84px;font-size:12px;color:#000;left:688.50px;transform-origin:0 50%;transform:scaleX(0.87);">Automatique</div>
<div class="t " style="top:362.84px;font-size:12px;color:#000;left:755.50px;transform-origin:0 50%;transform:scaleX(0.87);">Évaluation</div>
<div class="r" style="left:1px;top:395px;width:865px;height:1px;background:#a0a0a0;"></div>
<div class="r" style="left:23px;top:378px;width:1px;height:17px;background:#a0a0a0;"></div>
<div class="r" style="left:114px;top:378px;width:1px;height:17px;background:#a0a0a0;"></div>
<div class="r" style="left:385px;top:378px;width:1px;height:17px;background:#a0a0a0;"></div>
<div class="r" style="left:535px;top:378px;width:1px;height:17px;background:#a0a0a0;"></div>
<div class="r" style="left:685px;top:378px;width:1px;height:17px;background:#a0a0a0;"></div>
<div class="r" style="left:752px;top:378px;width:1px;height:17px;background:#a0a0a0;"></div>
<div class="r" style="left:7px;top:382px;width:10px;height:10px;border:1px solid #dedede;border-radius:2px;background:linear-gradient(#fbfbfb,#f0f0f0);"></div>
<div class="t " style="top:380.84px;font-size:12px;color:#000;right:755.40px;transform-origin:100% 50%;transform:scaleX(0.87);">81100</div>
<div class="t " style="top:380.84px;font-size:12px;color:#000;left:117.00px;transform-origin:0 50%;transform:scaleX(0.87);">Heures effectuées</div>
<div class="t " style="top:380.84px;font-size:12px;color:#000;left:388.50px;transform-origin:0 50%;transform:scaleX(0.87);">Genre de salaire accessoire</div>
<div class="t " style="top:380.84px;font-size:12px;color:#000;left:538.50px;transform-origin:0 50%;transform:scaleX(0.87);">Allocation supplémentaire</div>
<div class="t " style="top:380.84px;font-size:12px;color:#000;left:688.50px;transform-origin:0 50%;transform:scaleX(0.87);">Automatique</div>
<div class="t " style="top:380.84px;font-size:12px;color:#000;left:755.50px;transform-origin:0 50%;transform:scaleX(0.87);">Évaluation</div>
<div class="r" style="left:1px;top:413px;width:865px;height:1px;background:#a0a0a0;"></div>
<div class="r" style="left:23px;top:396px;width:1px;height:17px;background:#a0a0a0;"></div>
<div class="r" style="left:114px;top:396px;width:1px;height:17px;background:#a0a0a0;"></div>
<div class="r" style="left:385px;top:396px;width:1px;height:17px;background:#a0a0a0;"></div>
<div class="r" style="left:535px;top:396px;width:1px;height:17px;background:#a0a0a0;"></div>
<div class="r" style="left:685px;top:396px;width:1px;height:17px;background:#a0a0a0;"></div>
<div class="r" style="left:752px;top:396px;width:1px;height:17px;background:#a0a0a0;"></div>
<div class="r" style="left:7px;top:400px;width:10px;height:10px;border:1px solid #dedede;border-radius:2px;background:linear-gradient(#fbfbfb,#f0f0f0);"></div>
<div class="t " style="top:398.84px;font-size:12px;color:#000;right:755.40px;transform-origin:100% 50%;transform:scaleX(0.87);">81200</div>
<div class="t " style="top:398.84px;font-size:12px;color:#000;left:117.00px;transform-origin:0 50%;transform:scaleX(0.87);">Solde des heures supplémentaires mois préc.</div>
<div class="t " style="top:398.84px;font-size:12px;color:#000;left:388.50px;transform-origin:0 50%;transform:scaleX(0.87);">Genre de salaire accessoire</div>
<div class="t " style="top:398.84px;font-size:12px;color:#000;left:538.50px;transform-origin:0 50%;transform:scaleX(0.87);">Allocation supplémentaire</div>
<div class="t " style="top:398.84px;font-size:12px;color:#000;left:688.50px;transform-origin:0 50%;transform:scaleX(0.87);">Automatique</div>
<div class="t " style="top:398.84px;font-size:12px;color:#000;left:755.50px;transform-origin:0 50%;transform:scaleX(0.87);">Ne peut pas être corrigé</div>
<div class="r" style="left:1px;top:431px;width:865px;height:1px;background:#a0a0a0;"></div>
<div class="r" style="left:23px;top:414px;width:1px;height:17px;background:#a0a0a0;"></div>
<div class="r" style="left:114px;top:414px;width:1px;height:17px;background:#a0a0a0;"></div>
<div class="r" style="left:385px;top:414px;width:1px;height:17px;background:#a0a0a0;"></div>
<div class="r" style="left:535px;top:414px;width:1px;height:17px;background:#a0a0a0;"></div>
<div class="r" style="left:685px;top:414px;width:1px;height:17px;background:#a0a0a0;"></div>
<div class="r" style="left:752px;top:414px;width:1px;height:17px;background:#a0a0a0;"></div>
<div class="r" style="left:7px;top:418px;width:10px;height:10px;border:1px solid #dedede;border-radius:2px;background:linear-gradient(#fbfbfb,#f0f0f0);"></div>
<div class="t " style="top:416.84px;font-size:12px;color:#000;right:755.40px;transform-origin:100% 50%;transform:scaleX(0.87);">81250</div>
<div class="t " style="top:416.84px;font-size:12px;color:#000;left:117.00px;transform-origin:0 50%;transform:scaleX(0.87);">Heures supplémentaires effectuées</div>
<div class="t " style="top:416.84px;font-size:12px;color:#000;left:388.50px;transform-origin:0 50%;transform:scaleX(0.87);">Genre de salaire accessoire</div>
<div class="t " style="top:416.84px;font-size:12px;color:#000;left:538.50px;transform-origin:0 50%;transform:scaleX(0.87);">Allocation supplémentaire</div>
<div class="t " style="top:416.84px;font-size:12px;color:#000;left:688.50px;transform-origin:0 50%;transform:scaleX(0.87);">Automatique</div>
<div class="t " style="top:416.84px;font-size:12px;color:#000;left:755.50px;transform-origin:0 50%;transform:scaleX(0.87);">Ne peut pas être corrigé</div>
<div class="r" style="left:1px;top:449px;width:865px;height:1px;background:#a0a0a0;"></div>
<div class="r" style="left:23px;top:432px;width:1px;height:17px;background:#a0a0a0;"></div>
<div class="r" style="left:114px;top:432px;width:1px;height:17px;background:#a0a0a0;"></div>
<div class="r" style="left:385px;top:432px;width:1px;height:17px;background:#a0a0a0;"></div>
<div class="r" style="left:535px;top:432px;width:1px;height:17px;background:#a0a0a0;"></div>
<div class="r" style="left:685px;top:432px;width:1px;height:17px;background:#a0a0a0;"></div>
<div class="r" style="left:752px;top:432px;width:1px;height:17px;background:#a0a0a0;"></div>
<div class="r" style="left:7px;top:436px;width:10px;height:10px;border:1px solid #dedede;border-radius:2px;background:linear-gradient(#fbfbfb,#f0f0f0);"></div>
<div class="t " style="top:434.84px;font-size:12px;color:#000;right:755.40px;transform-origin:100% 50%;transform:scaleX(0.87);">81260</div>
<div class="t " style="top:434.84px;font-size:12px;color:#000;left:117.00px;transform-origin:0 50%;transform:scaleX(0.87);">Heures supplémentaires payées</div>
<div class="t " style="top:434.84px;font-size:12px;color:#000;left:388.50px;transform-origin:0 50%;transform:scaleX(0.87);">Genre de salaire accessoire</div>
<div class="t " style="top:434.84px;font-size:12px;color:#000;left:538.50px;transform-origin:0 50%;transform:scaleX(0.87);">Allocation supplémentaire</div>
<div class="t " style="top:434.84px;font-size:12px;color:#000;left:688.50px;transform-origin:0 50%;transform:scaleX(0.87);">Automatique</div>
<div class="t " style="top:434.84px;font-size:12px;color:#000;left:755.50px;transform-origin:0 50%;transform:scaleX(0.87);">Ne peut pas être corrigé</div>
<div class="r" style="left:1px;top:467px;width:865px;height:1px;background:#a0a0a0;"></div>
<div class="r" style="left:23px;top:450px;width:1px;height:17px;background:#a0a0a0;"></div>
<div class="r" style="left:114px;top:450px;width:1px;height:17px;background:#a0a0a0;"></div>
<div class="r" style="left:385px;top:450px;width:1px;height:17px;background:#a0a0a0;"></div>
<div class="r" style="left:535px;top:450px;width:1px;height:17px;background:#a0a0a0;"></div>
<div class="r" style="left:685px;top:450px;width:1px;height:17px;background:#a0a0a0;"></div>
<div class="r" style="left:752px;top:450px;width:1px;height:17px;background:#a0a0a0;"></div>
<div class="r" style="left:7px;top:454px;width:10px;height:10px;border:1px solid #dedede;border-radius:2px;background:linear-gradient(#fbfbfb,#f0f0f0);"></div>
<div class="t " style="top:452.84px;font-size:12px;color:#000;right:755.40px;transform-origin:100% 50%;transform:scaleX(0.87);">81270</div>
<div class="t " style="top:452.84px;font-size:12px;color:#000;left:117.00px;transform-origin:0 50%;transform:scaleX(0.87);">Heures supplémentaires compensées</div>
<div class="t " style="top:452.84px;font-size:12px;color:#000;left:388.50px;transform-origin:0 50%;transform:scaleX(0.87);">Genre de salaire accessoire</div>
<div class="t " style="top:452.84px;font-size:12px;color:#000;left:538.50px;transform-origin:0 50%;transform:scaleX(0.87);">Allocation supplémentaire</div>
<div class="t " style="top:452.84px;font-size:12px;color:#000;left:688.50px;transform-origin:0 50%;transform:scaleX(0.87);">Automatique</div>
<div class="t " style="top:452.84px;font-size:12px;color:#000;left:755.50px;transform-origin:0 50%;transform:scaleX(0.87);">Ne peut pas être corrigé</div>
<div class="r" style="left:1px;top:485px;width:865px;height:1px;background:#a0a0a0;"></div>
<div class="r" style="left:23px;top:468px;width:1px;height:17px;background:#a0a0a0;"></div>
<div class="r" style="left:114px;top:468px;width:1px;height:17px;background:#a0a0a0;"></div>
<div class="r" style="left:385px;top:468px;width:1px;height:17px;background:#a0a0a0;"></div>
<div class="r" style="left:535px;top:468px;width:1px;height:17px;background:#a0a0a0;"></div>
<div class="r" style="left:685px;top:468px;width:1px;height:17px;background:#a0a0a0;"></div>
<div class="r" style="left:752px;top:468px;width:1px;height:17px;background:#a0a0a0;"></div>
<div class="r" style="left:7px;top:472px;width:10px;height:10px;border:1px solid #dedede;border-radius:2px;background:linear-gradient(#fbfbfb,#f0f0f0);"></div>
<div class="t " style="top:470.84px;font-size:12px;color:#000;right:755.40px;transform-origin:100% 50%;transform:scaleX(0.87);">81300</div>
<div class="t " style="top:470.84px;font-size:12px;color:#000;left:117.00px;transform-origin:0 50%;transform:scaleX(0.87);">Nouveau solde des heures supplémentaires</div>
<div class="t " style="top:470.84px;font-size:12px;color:#000;left:388.50px;transform-origin:0 50%;transform:scaleX(0.87);">Genre de salaire accessoire</div>
<div class="t " style="top:470.84px;font-size:12px;color:#000;left:538.50px;transform-origin:0 50%;transform:scaleX(0.87);">Allocation supplémentaire</div>
<div class="t " style="top:470.84px;font-size:12px;color:#000;left:688.50px;transform-origin:0 50%;transform:scaleX(0.87);">Automatique</div>
<div class="t " style="top:470.84px;font-size:12px;color:#000;left:755.50px;transform-origin:0 50%;transform:scaleX(0.87);">Ne peut pas être corrigé</div>
</div>
<div class="r" style="left:1075px;top:186px;width:17px;height:526px;background:linear-gradient(90deg,#e6e6e6,#f0f0f0 40%,#ececec);border-left:1px solid #e8e8e8;"></div>
<svg class="r" style="left:1080px;top:192px;" width="9" height="6" viewBox="0 0 9 6"><path d="M0.5 5 L4.5 1 L8.5 5 Z" fill="#444"/></svg>
<svg class="r" style="left:1080px;top:701px;" width="9" height="6" viewBox="0 0 9 6"><path d="M0.5 1 L4.5 5 L8.5 1 Z" fill="#444"/></svg>
<div class="r" style="left:1076px;top:562px;width:15px;height:55px;border:1px solid #9a9a9a;border-radius:2px;background:linear-gradient(90deg,#e4e4e4,#f6f6f6 50%,#d4d4d4);"></div>
<svg class="r" style="left:1079px;top:585px;" width="9" height="10" viewBox="0 0 9 10"><path d="M1 1.5 H8 M1 4 H8 M1 6.5 H8" stroke="#555" stroke-width="1"/></svg>
<div class="r" style="left:209px;top:712px;width:866px;height:2px;background:#dcdcdc;"></div>
</body></html>
